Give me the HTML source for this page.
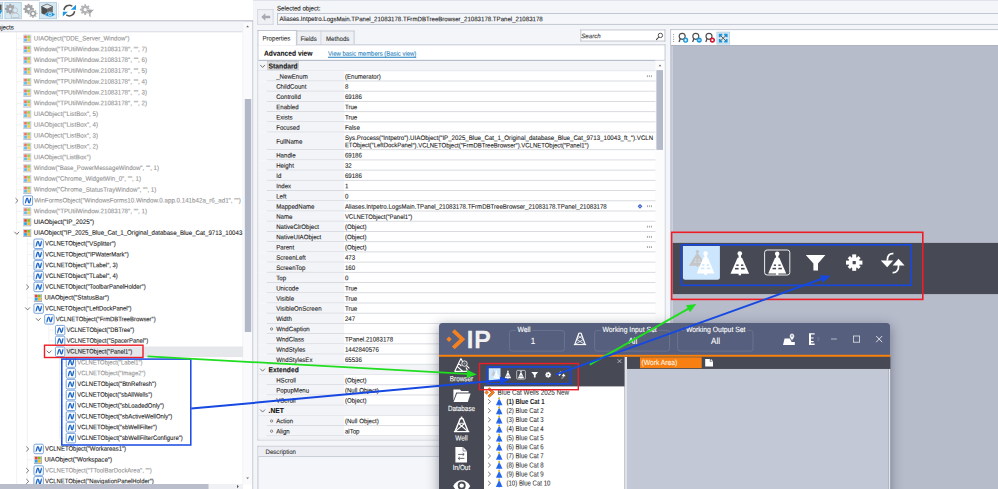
<!DOCTYPE html><html><head><meta charset="utf-8"><title>Object Browser</title><style>
*{margin:0;padding:0;box-sizing:border-box}
html,body{width:998px;height:489px;overflow:hidden;background:#f4f5f8}
body{position:relative;font-family:"Liberation Sans",sans-serif;font-size:6.1px;color:#1a1a1a}
.a{position:absolute}
.t{position:absolute;white-space:nowrap;line-height:10px;height:10px;-webkit-text-stroke:0.1px;font-size:6.6px;transform:scaleX(.925) rotate(.03deg);transform-origin:0 50%}
.c{transform-origin:50% 50%;text-align:center}
.g{color:#929292}
.b{font-weight:bold}
svg{position:absolute;overflow:visible}
</style></head><body>
<svg style="left:0;top:0" width="998" height="489" viewBox="0 0 998 489"><rect x="0.00" y="0.00" width="253.00" height="489.00" fill="#fff"/><rect x="0.00" y="0.00" width="40.00" height="1.00" fill="#d5d8e0"/><rect x="-3.00" y="2.30" width="5.90" height="16.80" fill="#d6e8f2"/><rect x="-3.00" y="2.30" width="5.90" height="0.7" fill="#a9c9de"/><rect x="2.20" y="2.30" width="0.7" height="16.80" fill="#a9c9de"/><rect x="-3.00" y="18.40" width="5.90" height="0.7" fill="#a9c9de"/><rect x="-3.00" y="2.30" width="0.7" height="16.80" fill="#a9c9de"/><rect x="4.60" y="2.30" width="17.00" height="16.80" fill="#d6e8f2"/><rect x="4.60" y="2.30" width="17.00" height="0.7" fill="#a9c9de"/><rect x="20.90" y="2.30" width="0.7" height="16.80" fill="#a9c9de"/><rect x="4.60" y="18.40" width="17.00" height="0.7" fill="#a9c9de"/><rect x="4.60" y="2.30" width="0.7" height="16.80" fill="#a9c9de"/><rect x="39.10" y="2.30" width="17.70" height="16.80" fill="#d6e8f2"/><rect x="39.10" y="2.30" width="17.70" height="0.7" fill="#a9c9de"/><rect x="56.10" y="2.30" width="0.7" height="16.80" fill="#a9c9de"/><rect x="39.10" y="18.40" width="17.70" height="0.7" fill="#a9c9de"/><rect x="39.10" y="2.30" width="0.7" height="16.80" fill="#a9c9de"/><rect x="58.30" y="3.00" width="0.80" height="15.00" fill="#e2e4ea"/><rect x="0.00" y="20.30" width="253.00" height="1.40" fill="#b4b8c6"/><rect x="0.00" y="21.40" width="243.00" height="10.80" fill="#f4f5f9"/><rect x="0.00" y="31.40" width="243.00" height="0.8" fill="#d4d7e0"/></svg>
<div class="t " style="left:-7px;top:22px;transform:translate(0.00px,0.50px) scaleX(0.925) rotate(.03deg);">Objects</div>
<svg style="left:0;top:0" width="998" height="489" viewBox="0 0 998 489"><rect x="242.60" y="21.60" width="10.00" height="463.00" fill="#fafafc"/><rect x="242.60" y="21.60" width="0.6" height="463.00" fill="#eceef2"/><rect x="244.80" y="99.00" width="6.40" height="233.00" fill="#b3b8c8"/><rect x="252.30" y="20.20" width="0.90" height="469.00" fill="#c3c7d2"/><rect x="0.00" y="484.00" width="243.00" height="5.00" fill="#f0f1f5"/><rect x="0.00" y="484.00" width="208.50" height="5.00" fill="#b9bdcc"/><rect x="65.65" y="346.50" width="177.35" height="10.60" fill="#e6e7ea"/></svg>
<div class="t g" style="left:33px;top:33px;transform:translate(0.85px,0.40px) scaleX(0.9264) rotate(.03deg);">UIAObject(&quot;DDE_Server_Window&quot;)</div>
<div class="t g" style="left:33px;top:44px;transform:translate(0.85px,0.20px) scaleX(0.9404) rotate(.03deg);">Window(&quot;TPUtilWindow.21083178&quot;, &quot;&quot;, 7)</div>
<div class="t g" style="left:33px;top:55px;transform:translate(0.85px,0.00px) scaleX(0.9404) rotate(.03deg);">Window(&quot;TPUtilWindow.21083178&quot;, &quot;&quot;, 6)</div>
<div class="t g" style="left:33px;top:65px;transform:translate(0.85px,0.80px) scaleX(0.9404) rotate(.03deg);">Window(&quot;TPUtilWindow.21083178&quot;, &quot;&quot;, 5)</div>
<div class="t g" style="left:33px;top:76px;transform:translate(0.85px,0.60px) scaleX(0.9404) rotate(.03deg);">Window(&quot;TPUtilWindow.21083178&quot;, &quot;&quot;, 4)</div>
<div class="t g" style="left:33px;top:87px;transform:translate(0.85px,0.40px) scaleX(0.9404) rotate(.03deg);">Window(&quot;TPUtilWindow.21083178&quot;, &quot;&quot;, 3)</div>
<div class="t g" style="left:33px;top:98px;transform:translate(0.85px,0.20px) scaleX(0.9404) rotate(.03deg);">Window(&quot;TPUtilWindow.21083178&quot;, &quot;&quot;, 2)</div>
<div class="t g" style="left:33px;top:109px;transform:translate(0.85px,0.00px) scaleX(0.9438) rotate(.03deg);">UIAObject(&quot;ListBox&quot;, 5)</div>
<div class="t g" style="left:33px;top:119px;transform:translate(0.85px,0.80px) scaleX(0.9438) rotate(.03deg);">UIAObject(&quot;ListBox&quot;, 4)</div>
<div class="t g" style="left:33px;top:130px;transform:translate(0.85px,0.60px) scaleX(0.9438) rotate(.03deg);">UIAObject(&quot;ListBox&quot;, 3)</div>
<div class="t g" style="left:33px;top:141px;transform:translate(0.85px,0.40px) scaleX(0.9438) rotate(.03deg);">UIAObject(&quot;ListBox&quot;, 2)</div>
<div class="t g" style="left:33px;top:152px;transform:translate(0.85px,0.20px) scaleX(0.9358) rotate(.03deg);">UIAObject(&quot;ListBox&quot;)</div>
<div class="t g" style="left:33px;top:163px;transform:translate(0.85px,0.00px) scaleX(0.9216) rotate(.03deg);">Window(&quot;Base_PowerMessageWindow&quot;, &quot;&quot;, 1)</div>
<div class="t g" style="left:33px;top:173px;transform:translate(0.85px,0.80px) scaleX(0.9356) rotate(.03deg);">Window(&quot;Chrome_WidgetWin_0&quot;, &quot;&quot;, 1)</div>
<div class="t g" style="left:33px;top:184px;transform:translate(0.85px,0.60px) scaleX(0.9396) rotate(.03deg);">Window(&quot;Chrome_StatusTrayWindow&quot;, &quot;&quot;, 1)</div>
<div class="t g" style="left:34px;top:195px;transform:translate(0.20px,0.40px) scaleX(0.9398) rotate(.03deg);">WinFormsObject(&quot;WindowsForms10.Window.0.app.0.141b42a_r6_ad1&quot;, &quot;&quot;)</div>
<div class="t g" style="left:33px;top:206px;transform:translate(0.85px,0.20px) scaleX(0.9404) rotate(.03deg);">Window(&quot;TPUtilWindow.21083178&quot;, &quot;&quot;, 1)</div>
<div class="t " style="left:33px;top:217px;transform:translate(0.85px,0.00px) scaleX(0.9445) rotate(.03deg);">UIAObject(&quot;IP_2025&quot;)</div>
<div class="t " style="left:33px;top:227px;transform:translate(0.85px,0.80px) scaleX(0.9239) rotate(.03deg);">UIAObject(&quot;IP_2025_Blue_Cat_1_Original_database_Blue_Cat_9713_10043</div>
<div class="t " style="left:44px;top:238px;transform:translate(0.95px,0.60px) scaleX(0.8961) rotate(.03deg);">VCLNETObject(&quot;VSplitter&quot;)</div>
<div class="t " style="left:44px;top:249px;transform:translate(0.95px,0.40px) scaleX(0.9079) rotate(.03deg);">VCLNETObject(&quot;IPWaterMark&quot;)</div>
<div class="t " style="left:44px;top:260px;transform:translate(0.95px,0.20px) scaleX(0.8935) rotate(.03deg);">VCLNETObject(&quot;TLabel&quot;, 3)</div>
<div class="t " style="left:44px;top:271px;transform:translate(0.95px,0.00px) scaleX(0.8935) rotate(.03deg);">VCLNETObject(&quot;TLabel&quot;, 4)</div>
<div class="t " style="left:44px;top:281px;transform:translate(0.95px,0.80px) scaleX(0.8999) rotate(.03deg);">VCLNETObject(&quot;ToolbarPanelHolder&quot;)</div>
<div class="t " style="left:44px;top:292px;transform:translate(0.60px,0.60px) scaleX(0.946) rotate(.03deg);">UIAObject(&quot;StatusBar&quot;)</div>
<div class="t " style="left:44px;top:303px;transform:translate(0.95px,0.40px) scaleX(0.894) rotate(.03deg);">VCLNETObject(&quot;LeftDockPanel&quot;)</div>
<div class="t " style="left:55px;top:314px;transform:translate(0.70px,0.20px) scaleX(0.8887) rotate(.03deg);">VCLNETObject(&quot;FrmDBTreeBrowser&quot;)</div>
<div class="t " style="left:66px;top:325px;transform:translate(0.45px,0.00px) scaleX(0.8869) rotate(.03deg);">VCLNETObject(&quot;DBTree&quot;)</div>
<div class="t " style="left:66px;top:335px;transform:translate(0.45px,0.80px) scaleX(0.8896) rotate(.03deg);">VCLNETObject(&quot;SpacerPanel&quot;)</div>
<div class="t " style="left:66px;top:346px;transform:translate(0.45px,0.60px) scaleX(0.8832) rotate(.03deg);">VCLNETObject(&quot;Panel1&quot;)</div>
<div class="t g" style="left:77px;top:357px;transform:translate(0.20px,0.40px) scaleX(0.8845) rotate(.03deg);">VCLNETObject(&quot;Label1&quot;)</div>
<div class="t g" style="left:77px;top:368px;transform:translate(0.20px,0.20px) scaleX(0.8996) rotate(.03deg);">VCLNETObject(&quot;Image2&quot;)</div>
<div class="t " style="left:77px;top:379px;transform:translate(0.20px,0.00px) scaleX(0.9079) rotate(.03deg);">VCLNETObject(&quot;BtnRefresh&quot;)</div>
<div class="t " style="left:77px;top:389px;transform:translate(0.20px,0.80px) scaleX(0.8894) rotate(.03deg);">VCLNETObject(&quot;sbAllWells&quot;)</div>
<div class="t " style="left:77px;top:400px;transform:translate(0.20px,0.60px) scaleX(0.8999) rotate(.03deg);">VCLNETObject(&quot;sbLoadedOnly&quot;)</div>
<div class="t " style="left:77px;top:411px;transform:translate(0.20px,0.40px) scaleX(0.9038) rotate(.03deg);">VCLNETObject(&quot;sbActiveWellOnly&quot;)</div>
<div class="t " style="left:77px;top:422px;transform:translate(0.20px,0.20px) scaleX(0.9033) rotate(.03deg);">VCLNETObject(&quot;sbWellFilter&quot;)</div>
<div class="t " style="left:77px;top:433px;transform:translate(0.20px,0.00px) scaleX(0.903) rotate(.03deg);">VCLNETObject(&quot;sbWellFilterConfigure&quot;)</div>
<div class="t " style="left:44px;top:443px;transform:translate(0.95px,0.80px) scaleX(0.9072) rotate(.03deg);">VCLNETObject(&quot;Workareas1&quot;)</div>
<div class="t " style="left:44px;top:454px;transform:translate(0.60px,0.60px) scaleX(0.9377) rotate(.03deg);">UIAObject(&quot;Workspace&quot;)</div>
<div class="t g" style="left:44px;top:465px;transform:translate(0.95px,0.40px) scaleX(0.9068) rotate(.03deg);">VCLNETObject(&quot;TToolBarDockArea&quot;, &quot;&quot;)</div>
<div class="t " style="left:44px;top:476px;transform:translate(0.95px,0.20px) scaleX(0.896) rotate(.03deg);">VCLNETObject(&quot;NavigationPanelHolder&quot;)</div>
<svg class="a" style="left:0;top:0" width="253" height="489" viewBox="0 0 253 489"><path d="M16.60 32.12 V492.20" stroke="#ececee" stroke-width="0.7"/><path d="M27.35 238.40 V481.40" stroke="#ececee" stroke-width="0.7"/><path d="M38.10 314.00 V319.40" stroke="#ececee" stroke-width="0.7"/><path d="M48.85 324.80 V351.80" stroke="#ececee" stroke-width="0.7"/><path d="M59.60 357.20 V438.20" stroke="#ececee" stroke-width="0.7"/><g opacity="0.75"><rect x="23.20" y="34.70" width="8" height="8" rx="0.5" fill="#9aa3b8"/><rect x="23.20" y="34.70" width="7.4" height="7.4" rx="0.5" fill="#d3d7df"/><rect x="24.20" y="35.60" width="2.6" height="2.6" fill="#f0402c"/><rect x="27.30" y="35.60" width="2.6" height="2.6" fill="#7cc019"/><rect x="24.20" y="38.70" width="2.6" height="2.6" fill="#1aa7f0"/><rect x="27.30" y="38.70" width="2.6" height="2.6" fill="#fdb90c"/></g><path d="M16.60 38.60 H21.90" stroke="#ececee" stroke-width="0.7"/><g opacity="0.75"><rect x="23.20" y="45.50" width="8" height="8" rx="0.5" fill="#9aa3b8"/><rect x="23.20" y="45.50" width="7.4" height="7.4" rx="0.5" fill="#d3d7df"/><rect x="24.20" y="46.40" width="2.6" height="2.6" fill="#f0402c"/><rect x="27.30" y="46.40" width="2.6" height="2.6" fill="#7cc019"/><rect x="24.20" y="49.50" width="2.6" height="2.6" fill="#1aa7f0"/><rect x="27.30" y="49.50" width="2.6" height="2.6" fill="#fdb90c"/></g><path d="M16.60 49.40 H21.90" stroke="#ececee" stroke-width="0.7"/><g opacity="0.75"><rect x="23.20" y="56.30" width="8" height="8" rx="0.5" fill="#9aa3b8"/><rect x="23.20" y="56.30" width="7.4" height="7.4" rx="0.5" fill="#d3d7df"/><rect x="24.20" y="57.20" width="2.6" height="2.6" fill="#f0402c"/><rect x="27.30" y="57.20" width="2.6" height="2.6" fill="#7cc019"/><rect x="24.20" y="60.30" width="2.6" height="2.6" fill="#1aa7f0"/><rect x="27.30" y="60.30" width="2.6" height="2.6" fill="#fdb90c"/></g><path d="M16.60 60.20 H21.90" stroke="#ececee" stroke-width="0.7"/><g opacity="0.75"><rect x="23.20" y="67.10" width="8" height="8" rx="0.5" fill="#9aa3b8"/><rect x="23.20" y="67.10" width="7.4" height="7.4" rx="0.5" fill="#d3d7df"/><rect x="24.20" y="68.00" width="2.6" height="2.6" fill="#f0402c"/><rect x="27.30" y="68.00" width="2.6" height="2.6" fill="#7cc019"/><rect x="24.20" y="71.10" width="2.6" height="2.6" fill="#1aa7f0"/><rect x="27.30" y="71.10" width="2.6" height="2.6" fill="#fdb90c"/></g><path d="M16.60 71.00 H21.90" stroke="#ececee" stroke-width="0.7"/><g opacity="0.75"><rect x="23.20" y="77.90" width="8" height="8" rx="0.5" fill="#9aa3b8"/><rect x="23.20" y="77.90" width="7.4" height="7.4" rx="0.5" fill="#d3d7df"/><rect x="24.20" y="78.80" width="2.6" height="2.6" fill="#f0402c"/><rect x="27.30" y="78.80" width="2.6" height="2.6" fill="#7cc019"/><rect x="24.20" y="81.90" width="2.6" height="2.6" fill="#1aa7f0"/><rect x="27.30" y="81.90" width="2.6" height="2.6" fill="#fdb90c"/></g><path d="M16.60 81.80 H21.90" stroke="#ececee" stroke-width="0.7"/><g opacity="0.75"><rect x="23.20" y="88.70" width="8" height="8" rx="0.5" fill="#9aa3b8"/><rect x="23.20" y="88.70" width="7.4" height="7.4" rx="0.5" fill="#d3d7df"/><rect x="24.20" y="89.60" width="2.6" height="2.6" fill="#f0402c"/><rect x="27.30" y="89.60" width="2.6" height="2.6" fill="#7cc019"/><rect x="24.20" y="92.70" width="2.6" height="2.6" fill="#1aa7f0"/><rect x="27.30" y="92.70" width="2.6" height="2.6" fill="#fdb90c"/></g><path d="M16.60 92.60 H21.90" stroke="#ececee" stroke-width="0.7"/><g opacity="0.75"><rect x="23.20" y="99.50" width="8" height="8" rx="0.5" fill="#9aa3b8"/><rect x="23.20" y="99.50" width="7.4" height="7.4" rx="0.5" fill="#d3d7df"/><rect x="24.20" y="100.40" width="2.6" height="2.6" fill="#f0402c"/><rect x="27.30" y="100.40" width="2.6" height="2.6" fill="#7cc019"/><rect x="24.20" y="103.50" width="2.6" height="2.6" fill="#1aa7f0"/><rect x="27.30" y="103.50" width="2.6" height="2.6" fill="#fdb90c"/></g><path d="M16.60 103.40 H21.90" stroke="#ececee" stroke-width="0.7"/><g opacity="0.75"><rect x="23.20" y="110.30" width="8" height="8" rx="0.5" fill="#9aa3b8"/><rect x="23.20" y="110.30" width="7.4" height="7.4" rx="0.5" fill="#d3d7df"/><rect x="24.20" y="111.20" width="2.6" height="2.6" fill="#f0402c"/><rect x="27.30" y="111.20" width="2.6" height="2.6" fill="#7cc019"/><rect x="24.20" y="114.30" width="2.6" height="2.6" fill="#1aa7f0"/><rect x="27.30" y="114.30" width="2.6" height="2.6" fill="#fdb90c"/></g><path d="M16.60 114.20 H21.90" stroke="#ececee" stroke-width="0.7"/><g opacity="0.75"><rect x="23.20" y="121.10" width="8" height="8" rx="0.5" fill="#9aa3b8"/><rect x="23.20" y="121.10" width="7.4" height="7.4" rx="0.5" fill="#d3d7df"/><rect x="24.20" y="122.00" width="2.6" height="2.6" fill="#f0402c"/><rect x="27.30" y="122.00" width="2.6" height="2.6" fill="#7cc019"/><rect x="24.20" y="125.10" width="2.6" height="2.6" fill="#1aa7f0"/><rect x="27.30" y="125.10" width="2.6" height="2.6" fill="#fdb90c"/></g><path d="M16.60 125.00 H21.90" stroke="#ececee" stroke-width="0.7"/><g opacity="0.75"><rect x="23.20" y="131.90" width="8" height="8" rx="0.5" fill="#9aa3b8"/><rect x="23.20" y="131.90" width="7.4" height="7.4" rx="0.5" fill="#d3d7df"/><rect x="24.20" y="132.80" width="2.6" height="2.6" fill="#f0402c"/><rect x="27.30" y="132.80" width="2.6" height="2.6" fill="#7cc019"/><rect x="24.20" y="135.90" width="2.6" height="2.6" fill="#1aa7f0"/><rect x="27.30" y="135.90" width="2.6" height="2.6" fill="#fdb90c"/></g><path d="M16.60 135.80 H21.90" stroke="#ececee" stroke-width="0.7"/><g opacity="0.75"><rect x="23.20" y="142.70" width="8" height="8" rx="0.5" fill="#9aa3b8"/><rect x="23.20" y="142.70" width="7.4" height="7.4" rx="0.5" fill="#d3d7df"/><rect x="24.20" y="143.60" width="2.6" height="2.6" fill="#f0402c"/><rect x="27.30" y="143.60" width="2.6" height="2.6" fill="#7cc019"/><rect x="24.20" y="146.70" width="2.6" height="2.6" fill="#1aa7f0"/><rect x="27.30" y="146.70" width="2.6" height="2.6" fill="#fdb90c"/></g><path d="M16.60 146.60 H21.90" stroke="#ececee" stroke-width="0.7"/><g opacity="0.75"><rect x="23.20" y="153.50" width="8" height="8" rx="0.5" fill="#9aa3b8"/><rect x="23.20" y="153.50" width="7.4" height="7.4" rx="0.5" fill="#d3d7df"/><rect x="24.20" y="154.40" width="2.6" height="2.6" fill="#f0402c"/><rect x="27.30" y="154.40" width="2.6" height="2.6" fill="#7cc019"/><rect x="24.20" y="157.50" width="2.6" height="2.6" fill="#1aa7f0"/><rect x="27.30" y="157.50" width="2.6" height="2.6" fill="#fdb90c"/></g><path d="M16.60 157.40 H21.90" stroke="#ececee" stroke-width="0.7"/><g opacity="0.75"><rect x="23.20" y="164.30" width="8" height="8" rx="0.5" fill="#9aa3b8"/><rect x="23.20" y="164.30" width="7.4" height="7.4" rx="0.5" fill="#d3d7df"/><rect x="24.20" y="165.20" width="2.6" height="2.6" fill="#f0402c"/><rect x="27.30" y="165.20" width="2.6" height="2.6" fill="#7cc019"/><rect x="24.20" y="168.30" width="2.6" height="2.6" fill="#1aa7f0"/><rect x="27.30" y="168.30" width="2.6" height="2.6" fill="#fdb90c"/></g><path d="M16.60 168.20 H21.90" stroke="#ececee" stroke-width="0.7"/><g opacity="0.75"><rect x="23.20" y="175.10" width="8" height="8" rx="0.5" fill="#9aa3b8"/><rect x="23.20" y="175.10" width="7.4" height="7.4" rx="0.5" fill="#d3d7df"/><rect x="24.20" y="176.00" width="2.6" height="2.6" fill="#f0402c"/><rect x="27.30" y="176.00" width="2.6" height="2.6" fill="#7cc019"/><rect x="24.20" y="179.10" width="2.6" height="2.6" fill="#1aa7f0"/><rect x="27.30" y="179.10" width="2.6" height="2.6" fill="#fdb90c"/></g><path d="M16.60 179.00 H21.90" stroke="#ececee" stroke-width="0.7"/><g opacity="0.75"><rect x="23.20" y="185.90" width="8" height="8" rx="0.5" fill="#9aa3b8"/><rect x="23.20" y="185.90" width="7.4" height="7.4" rx="0.5" fill="#d3d7df"/><rect x="24.20" y="186.80" width="2.6" height="2.6" fill="#f0402c"/><rect x="27.30" y="186.80" width="2.6" height="2.6" fill="#7cc019"/><rect x="24.20" y="189.90" width="2.6" height="2.6" fill="#1aa7f0"/><rect x="27.30" y="189.90" width="2.6" height="2.6" fill="#fdb90c"/></g><path d="M16.60 189.80 H21.90" stroke="#ececee" stroke-width="0.7"/><g><rect x="23.20" y="195.80" width="9.4" height="9.5" rx="1.2" fill="#fff" stroke="#5b8ecf" stroke-width="0.8"/><path d="M24.90 203.10 C26.20 203.10 25.80 198.30 27.10 198.30 C28.50 198.30 27.80 202.80 29.20 202.80 C30.40 202.80 30.00 198.10 31.10 198.10" fill="none" stroke="#1f68c8" stroke-width="1.45"/></g><path d="M15.50 198.20 L18.00 200.60 L15.50 203.00" fill="none" stroke="#555" stroke-width="0.8"/><g opacity="0.75"><rect x="23.20" y="207.50" width="8" height="8" rx="0.5" fill="#9aa3b8"/><rect x="23.20" y="207.50" width="7.4" height="7.4" rx="0.5" fill="#d3d7df"/><rect x="24.20" y="208.40" width="2.6" height="2.6" fill="#f0402c"/><rect x="27.30" y="208.40" width="2.6" height="2.6" fill="#7cc019"/><rect x="24.20" y="211.50" width="2.6" height="2.6" fill="#1aa7f0"/><rect x="27.30" y="211.50" width="2.6" height="2.6" fill="#fdb90c"/></g><path d="M16.60 211.40 H21.90" stroke="#ececee" stroke-width="0.7"/><g><rect x="23.20" y="218.30" width="8" height="8" rx="0.5" fill="#9aa3b8"/><rect x="23.20" y="218.30" width="7.4" height="7.4" rx="0.5" fill="#d3d7df"/><rect x="24.20" y="219.20" width="2.6" height="2.6" fill="#f0402c"/><rect x="27.30" y="219.20" width="2.6" height="2.6" fill="#7cc019"/><rect x="24.20" y="222.30" width="2.6" height="2.6" fill="#1aa7f0"/><rect x="27.30" y="222.30" width="2.6" height="2.6" fill="#fdb90c"/></g><path d="M16.60 222.20 H21.90" stroke="#ececee" stroke-width="0.7"/><g><rect x="23.20" y="229.10" width="8" height="8" rx="0.5" fill="#9aa3b8"/><rect x="23.20" y="229.10" width="7.4" height="7.4" rx="0.5" fill="#d3d7df"/><rect x="24.20" y="230.00" width="2.6" height="2.6" fill="#f0402c"/><rect x="27.30" y="230.00" width="2.6" height="2.6" fill="#7cc019"/><rect x="24.20" y="233.10" width="2.6" height="2.6" fill="#1aa7f0"/><rect x="27.30" y="233.10" width="2.6" height="2.6" fill="#fdb90c"/></g><path d="M14.40 231.80 L16.80 234.30 L19.20 231.80" fill="none" stroke="#555" stroke-width="0.8"/><g><rect x="33.95" y="239.00" width="9.4" height="9.5" rx="1.2" fill="#fff" stroke="#5b8ecf" stroke-width="0.8"/><path d="M35.65 246.30 C36.95 246.30 36.55 241.50 37.85 241.50 C39.25 241.50 38.55 246.00 39.95 246.00 C41.15 246.00 40.75 241.30 41.85 241.30" fill="none" stroke="#1f68c8" stroke-width="1.45"/></g><path d="M27.35 243.80 H32.65" stroke="#ececee" stroke-width="0.7"/><g><rect x="33.95" y="249.80" width="9.4" height="9.5" rx="1.2" fill="#fff" stroke="#5b8ecf" stroke-width="0.8"/><path d="M35.65 257.10 C36.95 257.10 36.55 252.30 37.85 252.30 C39.25 252.30 38.55 256.80 39.95 256.80 C41.15 256.80 40.75 252.10 41.85 252.10" fill="none" stroke="#1f68c8" stroke-width="1.45"/></g><path d="M27.35 254.60 H32.65" stroke="#ececee" stroke-width="0.7"/><g><rect x="33.95" y="260.60" width="9.4" height="9.5" rx="1.2" fill="#fff" stroke="#5b8ecf" stroke-width="0.8"/><path d="M35.65 267.90 C36.95 267.90 36.55 263.10 37.85 263.10 C39.25 263.10 38.55 267.60 39.95 267.60 C41.15 267.60 40.75 262.90 41.85 262.90" fill="none" stroke="#1f68c8" stroke-width="1.45"/></g><path d="M27.35 265.40 H32.65" stroke="#ececee" stroke-width="0.7"/><g><rect x="33.95" y="271.40" width="9.4" height="9.5" rx="1.2" fill="#fff" stroke="#5b8ecf" stroke-width="0.8"/><path d="M35.65 278.70 C36.95 278.70 36.55 273.90 37.85 273.90 C39.25 273.90 38.55 278.40 39.95 278.40 C41.15 278.40 40.75 273.70 41.85 273.70" fill="none" stroke="#1f68c8" stroke-width="1.45"/></g><path d="M27.35 276.20 H32.65" stroke="#ececee" stroke-width="0.7"/><g><rect x="33.95" y="282.20" width="9.4" height="9.5" rx="1.2" fill="#fff" stroke="#5b8ecf" stroke-width="0.8"/><path d="M35.65 289.50 C36.95 289.50 36.55 284.70 37.85 284.70 C39.25 284.70 38.55 289.20 39.95 289.20 C41.15 289.20 40.75 284.50 41.85 284.50" fill="none" stroke="#1f68c8" stroke-width="1.45"/></g><path d="M26.25 284.60 L28.75 287.00 L26.25 289.40" fill="none" stroke="#555" stroke-width="0.8"/><g><rect x="33.95" y="293.90" width="8" height="8" rx="0.5" fill="#9aa3b8"/><rect x="33.95" y="293.90" width="7.4" height="7.4" rx="0.5" fill="#d3d7df"/><rect x="34.95" y="294.80" width="2.6" height="2.6" fill="#f0402c"/><rect x="38.05" y="294.80" width="2.6" height="2.6" fill="#7cc019"/><rect x="34.95" y="297.90" width="2.6" height="2.6" fill="#1aa7f0"/><rect x="38.05" y="297.90" width="2.6" height="2.6" fill="#fdb90c"/></g><path d="M27.35 297.80 H32.65" stroke="#ececee" stroke-width="0.7"/><g><rect x="33.95" y="303.80" width="9.4" height="9.5" rx="1.2" fill="#fff" stroke="#5b8ecf" stroke-width="0.8"/><path d="M35.65 311.10 C36.95 311.10 36.55 306.30 37.85 306.30 C39.25 306.30 38.55 310.80 39.95 310.80 C41.15 310.80 40.75 306.10 41.85 306.10" fill="none" stroke="#1f68c8" stroke-width="1.45"/></g><path d="M25.15 307.40 L27.55 309.90 L29.95 307.40" fill="none" stroke="#555" stroke-width="0.8"/><g><rect x="44.70" y="314.60" width="9.4" height="9.5" rx="1.2" fill="#fff" stroke="#5b8ecf" stroke-width="0.8"/><path d="M46.40 321.90 C47.70 321.90 47.30 317.10 48.60 317.10 C50.00 317.10 49.30 321.60 50.70 321.60 C51.90 321.60 51.50 316.90 52.60 316.90" fill="none" stroke="#1f68c8" stroke-width="1.45"/></g><path d="M35.90 318.20 L38.30 320.70 L40.70 318.20" fill="none" stroke="#555" stroke-width="0.8"/><g><rect x="55.45" y="325.40" width="9.4" height="9.5" rx="1.2" fill="#fff" stroke="#5b8ecf" stroke-width="0.8"/><path d="M57.15 332.70 C58.45 332.70 58.05 327.90 59.35 327.90 C60.75 327.90 60.05 332.40 61.45 332.40 C62.65 332.40 62.25 327.70 63.35 327.70" fill="none" stroke="#1f68c8" stroke-width="1.45"/></g><path d="M48.85 330.20 H54.15" stroke="#ececee" stroke-width="0.7"/><g><rect x="55.45" y="336.20" width="9.4" height="9.5" rx="1.2" fill="#fff" stroke="#5b8ecf" stroke-width="0.8"/><path d="M57.15 343.50 C58.45 343.50 58.05 338.70 59.35 338.70 C60.75 338.70 60.05 343.20 61.45 343.20 C62.65 343.20 62.25 338.50 63.35 338.50" fill="none" stroke="#1f68c8" stroke-width="1.45"/></g><path d="M48.85 341.00 H54.15" stroke="#ececee" stroke-width="0.7"/><g><rect x="55.45" y="347.00" width="9.4" height="9.5" rx="1.2" fill="#fff" stroke="#5b8ecf" stroke-width="0.8"/><path d="M57.15 354.30 C58.45 354.30 58.05 349.50 59.35 349.50 C60.75 349.50 60.05 354.00 61.45 354.00 C62.65 354.00 62.25 349.30 63.35 349.30" fill="none" stroke="#1f68c8" stroke-width="1.45"/></g><path d="M46.65 350.60 L49.05 353.10 L51.45 350.60" fill="none" stroke="#555" stroke-width="0.8"/><g><rect x="66.20" y="357.80" width="9.4" height="9.5" rx="1.2" fill="#fff" stroke="#5b8ecf" stroke-width="0.8"/><path d="M67.90 365.10 C69.20 365.10 68.80 360.30 70.10 360.30 C71.50 360.30 70.80 364.80 72.20 364.80 C73.40 364.80 73.00 360.10 74.10 360.10" fill="none" stroke="#1f68c8" stroke-width="1.45"/></g><path d="M59.60 362.60 H64.90" stroke="#ececee" stroke-width="0.7"/><g><rect x="66.20" y="368.60" width="9.4" height="9.5" rx="1.2" fill="#fff" stroke="#5b8ecf" stroke-width="0.8"/><path d="M67.90 375.90 C69.20 375.90 68.80 371.10 70.10 371.10 C71.50 371.10 70.80 375.60 72.20 375.60 C73.40 375.60 73.00 370.90 74.10 370.90" fill="none" stroke="#1f68c8" stroke-width="1.45"/></g><path d="M59.60 373.40 H64.90" stroke="#ececee" stroke-width="0.7"/><g><rect x="66.20" y="379.40" width="9.4" height="9.5" rx="1.2" fill="#fff" stroke="#5b8ecf" stroke-width="0.8"/><path d="M67.90 386.70 C69.20 386.70 68.80 381.90 70.10 381.90 C71.50 381.90 70.80 386.40 72.20 386.40 C73.40 386.40 73.00 381.70 74.10 381.70" fill="none" stroke="#1f68c8" stroke-width="1.45"/></g><path d="M59.60 384.20 H64.90" stroke="#ececee" stroke-width="0.7"/><g><rect x="66.20" y="390.20" width="9.4" height="9.5" rx="1.2" fill="#fff" stroke="#5b8ecf" stroke-width="0.8"/><path d="M67.90 397.50 C69.20 397.50 68.80 392.70 70.10 392.70 C71.50 392.70 70.80 397.20 72.20 397.20 C73.40 397.20 73.00 392.50 74.10 392.50" fill="none" stroke="#1f68c8" stroke-width="1.45"/></g><path d="M59.60 395.00 H64.90" stroke="#ececee" stroke-width="0.7"/><g><rect x="66.20" y="401.00" width="9.4" height="9.5" rx="1.2" fill="#fff" stroke="#5b8ecf" stroke-width="0.8"/><path d="M67.90 408.30 C69.20 408.30 68.80 403.50 70.10 403.50 C71.50 403.50 70.80 408.00 72.20 408.00 C73.40 408.00 73.00 403.30 74.10 403.30" fill="none" stroke="#1f68c8" stroke-width="1.45"/></g><path d="M59.60 405.80 H64.90" stroke="#ececee" stroke-width="0.7"/><g><rect x="66.20" y="411.80" width="9.4" height="9.5" rx="1.2" fill="#fff" stroke="#5b8ecf" stroke-width="0.8"/><path d="M67.90 419.10 C69.20 419.10 68.80 414.30 70.10 414.30 C71.50 414.30 70.80 418.80 72.20 418.80 C73.40 418.80 73.00 414.10 74.10 414.10" fill="none" stroke="#1f68c8" stroke-width="1.45"/></g><path d="M59.60 416.60 H64.90" stroke="#ececee" stroke-width="0.7"/><g><rect x="66.20" y="422.60" width="9.4" height="9.5" rx="1.2" fill="#fff" stroke="#5b8ecf" stroke-width="0.8"/><path d="M67.90 429.90 C69.20 429.90 68.80 425.10 70.10 425.10 C71.50 425.10 70.80 429.60 72.20 429.60 C73.40 429.60 73.00 424.90 74.10 424.90" fill="none" stroke="#1f68c8" stroke-width="1.45"/></g><path d="M59.60 427.40 H64.90" stroke="#ececee" stroke-width="0.7"/><g><rect x="66.20" y="433.40" width="9.4" height="9.5" rx="1.2" fill="#fff" stroke="#5b8ecf" stroke-width="0.8"/><path d="M67.90 440.70 C69.20 440.70 68.80 435.90 70.10 435.90 C71.50 435.90 70.80 440.40 72.20 440.40 C73.40 440.40 73.00 435.70 74.10 435.70" fill="none" stroke="#1f68c8" stroke-width="1.45"/></g><path d="M59.60 438.20 H64.90" stroke="#ececee" stroke-width="0.7"/><g><rect x="33.95" y="444.20" width="9.4" height="9.5" rx="1.2" fill="#fff" stroke="#5b8ecf" stroke-width="0.8"/><path d="M35.65 451.50 C36.95 451.50 36.55 446.70 37.85 446.70 C39.25 446.70 38.55 451.20 39.95 451.20 C41.15 451.20 40.75 446.50 41.85 446.50" fill="none" stroke="#1f68c8" stroke-width="1.45"/></g><path d="M26.25 446.60 L28.75 449.00 L26.25 451.40" fill="none" stroke="#555" stroke-width="0.8"/><g><rect x="33.95" y="455.90" width="8" height="8" rx="0.5" fill="#9aa3b8"/><rect x="33.95" y="455.90" width="7.4" height="7.4" rx="0.5" fill="#d3d7df"/><rect x="34.95" y="456.80" width="2.6" height="2.6" fill="#f0402c"/><rect x="38.05" y="456.80" width="2.6" height="2.6" fill="#7cc019"/><rect x="34.95" y="459.90" width="2.6" height="2.6" fill="#1aa7f0"/><rect x="38.05" y="459.90" width="2.6" height="2.6" fill="#fdb90c"/></g><path d="M27.35 459.80 H32.65" stroke="#ececee" stroke-width="0.7"/><g><rect x="33.95" y="465.80" width="9.4" height="9.5" rx="1.2" fill="#fff" stroke="#5b8ecf" stroke-width="0.8"/><path d="M35.65 473.10 C36.95 473.10 36.55 468.30 37.85 468.30 C39.25 468.30 38.55 472.80 39.95 472.80 C41.15 472.80 40.75 468.10 41.85 468.10" fill="none" stroke="#1f68c8" stroke-width="1.45"/></g><path d="M26.25 468.20 L28.75 470.60 L26.25 473.00" fill="none" stroke="#555" stroke-width="0.8"/><g><rect x="33.95" y="476.60" width="9.4" height="9.5" rx="1.2" fill="#fff" stroke="#5b8ecf" stroke-width="0.8"/><path d="M35.65 483.90 C36.95 483.90 36.55 479.10 37.85 479.10 C39.25 479.10 38.55 483.60 39.95 483.60 C41.15 483.60 40.75 478.90 41.85 478.90" fill="none" stroke="#1f68c8" stroke-width="1.45"/></g><path d="M26.25 479.00 L28.75 481.40 L26.25 483.80" fill="none" stroke="#555" stroke-width="0.8"/></svg>
<svg style="left:0;top:0" width="998" height="489" viewBox="0 0 998 489"><rect x="0.00" y="484.00" width="243.00" height="5.00" fill="#f0f1f5"/><rect x="0.00" y="484.00" width="208.50" height="5.00" fill="#b9bdcc"/></svg>
<svg style="left:0;top:0" width="253" height="22" viewBox="0 0 253 22"><rect x="-2" y="4.5" width="3.6" height="6" fill="#555"/><path d="M-2 10.5 H2.4 L0 14.5 Z" fill="#1b96e0"/><rect x="-2" y="15" width="3" height="2.2" fill="#9fd0ee"/><path d="M15.42 8.09 L15.42 9.91 L14.19 9.96 L13.70 11.14 L14.54 12.05 L13.25 13.34 L12.34 12.50 L11.16 12.99 L11.11 14.22 L9.29 14.22 L9.24 12.99 L8.06 12.50 L7.15 13.34 L5.86 12.05 L6.70 11.14 L6.21 9.96 L4.98 9.91 L4.98 8.09 L6.21 8.04 L6.70 6.86 L5.86 5.95 L7.15 4.66 L8.06 5.50 L9.24 5.01 L9.29 3.78 L11.11 3.78 L11.16 5.01 L12.34 5.50 L13.25 4.66 L14.54 5.95 L13.70 6.86 L14.19 8.04 Z" fill="#a4a5a9"/><circle cx="10.2" cy="9.0" r="1.3" fill="#d6e8f2"/><circle cx="15.2" cy="10.3" r="2.5" fill="#d6e8f2" stroke="#b5b7bb" stroke-width="0.7"/><path d="M11.4 17.6 V15.4 Q11.4 13 15.2 13 Q19 13 19 15.4 V17.6 Z" fill="#d6e8f2" stroke="#b5b7bb" stroke-width="0.7"/><path d="M33.82 8.09 L33.82 9.91 L32.59 9.96 L32.10 11.14 L32.94 12.05 L31.65 13.34 L30.74 12.50 L29.56 12.99 L29.51 14.22 L27.69 14.22 L27.64 12.99 L26.46 12.50 L25.55 13.34 L24.26 12.05 L25.10 11.14 L24.61 9.96 L23.38 9.91 L23.38 8.09 L24.61 8.04 L25.10 6.86 L24.26 5.95 L25.55 4.66 L26.46 5.50 L27.64 5.01 L27.69 3.78 L29.51 3.78 L29.56 5.01 L30.74 5.50 L31.65 4.66 L32.94 5.95 L32.10 6.86 L32.59 8.04 Z" fill="#a4a5a9"/><circle cx="28.6" cy="9.0" r="1.3" fill="#fff"/><path d="M37.33 12.84 L37.33 14.36 L36.31 14.39 L35.90 15.38 L36.60 16.13 L35.53 17.20 L34.78 16.50 L33.79 16.91 L33.76 17.93 L32.24 17.93 L32.21 16.91 L31.22 16.50 L30.47 17.20 L29.40 16.13 L30.10 15.38 L29.69 14.39 L28.67 14.36 L28.67 12.84 L29.69 12.81 L30.10 11.82 L29.40 11.07 L30.47 10.00 L31.22 10.70 L32.21 10.29 L32.24 9.27 L33.76 9.27 L33.79 10.29 L34.78 10.70 L35.53 10.00 L36.60 11.07 L35.90 11.82 L36.31 12.81 Z" fill="#9fa0a4"/><circle cx="33.0" cy="13.6" r="1.5" fill="#fff"/><circle cx="33" cy="13.6" r="3.6" fill="none" stroke="#fff" stroke-width="0.5"/><path d="M41.4 6.6 L47 4 L52.8 6.6 L47 9.2 Z" fill="#dfeaf0" stroke="#4d4d4d" stroke-width="0.7"/><path d="M41.4 6.6 L47 9.2 V16 L41.4 13.2 Z" fill="#4d4d4d"/><path d="M47 9.2 L52.8 6.6 V13.2 L47 16 Z" fill="#666"/><path d="M44.6 14.6 Q50 9.2 55.4 14.6 Q50 19.4 44.6 14.6 Z" fill="#1b96e0" stroke="#d6e8f2" stroke-width="0.6"/><circle cx="50" cy="14.4" r="1.8" fill="#cfe9f8"/><circle cx="50" cy="14.4" r="0.9" fill="#1b96e0"/><path d="M64.02 10.14 A5.3 5.3 0 0 1 72.34 6.26" fill="none" stroke="#555" stroke-width="1.5"/><path d="M74.58 11.06 A5.3 5.3 0 0 1 66.26 14.94" fill="none" stroke="#555" stroke-width="1.5"/><path d="M76 4.8 V9.8 H70.8 Z" fill="#1b96e0"/><path d="M62.8 16.6 V11.8 H67.8 Z" fill="#1b96e0"/><path d="M90.52 8.67 L90.52 10.53 L89.09 10.53 L88.61 11.69 L89.62 12.71 L88.31 14.02 L87.29 13.01 L86.13 13.49 L86.13 14.92 L84.27 14.92 L84.27 13.49 L83.11 13.01 L82.09 14.02 L80.78 12.71 L81.79 11.69 L81.31 10.53 L79.88 10.53 L79.88 8.67 L81.31 8.67 L81.79 7.51 L80.78 6.49 L82.09 5.18 L83.11 6.19 L84.27 5.71 L84.27 4.28 L86.13 4.28 L86.13 5.71 L87.29 6.19 L88.31 5.18 L89.62 6.49 L88.61 7.51 L89.09 8.67 Z" fill="#b3b4b7"/><circle cx="85.2" cy="9.6" r="1.6" fill="#fff"/><path d="M85.6 9.6 H94.2 L90.8 13.2 V17.6 L89 16.2 V13.2 Z" fill="#a2a3a7" stroke="#fff" stroke-width="0.5"/></svg>
<svg style="left:0;top:0" width="253" height="489" viewBox="0 0 253 489"><path d="M246.2 27.2 L247.6 25.6 L249 27.2 Z" fill="#666"/><path d="M246.2 477.4 L247.6 479 L249 477.4 Z" fill="#666"/><path d="M237 484.8 L238.8 486.5 L237 488.2 Z" fill="#555"/></svg>
<svg style="left:0;top:0" width="998" height="489" viewBox="0 0 998 489"><rect x="253.00" y="0.00" width="745.00" height="1.00" fill="#e1e3ea"/><rect x="257.30" y="9.30" width="16.20" height="15.40" fill="#eef0f4"/><rect x="257.30" y="9.30" width="16.20" height="0.8" fill="#cfd3dc"/><rect x="272.70" y="9.30" width="0.8" height="15.40" fill="#cfd3dc"/><rect x="257.30" y="23.90" width="16.20" height="0.8" fill="#cfd3dc"/><rect x="257.30" y="9.30" width="0.8" height="15.40" fill="#cfd3dc"/></svg>
<svg style="left:260.5px;top:13px" width="10" height="8" viewBox="0 0 10 8"><path d="M0.3 4 L4.3 0.2 L4.3 2.8 L9.2 2.8 L9.2 5.2 L4.3 5.2 L4.3 7.8 Z" fill="#a6a9b1"/></svg>
<div class="t " style="left:277px;top:3px;transform:translate(0.00px,0.40px) scaleX(0.925) rotate(.03deg);">Selected object:</div>
<svg style="left:0;top:0" width="998" height="489" viewBox="0 0 998 489"><rect x="277.00" y="13.00" width="730.00" height="11.80" fill="#f5f6f9"/><rect x="277.00" y="13.00" width="730.00" height="0.9" fill="#bcc1ce"/><rect x="1006.10" y="13.00" width="0.9" height="11.80" fill="#bcc1ce"/><rect x="277.00" y="23.90" width="730.00" height="0.9" fill="#bcc1ce"/><rect x="277.00" y="13.00" width="0.9" height="11.80" fill="#bcc1ce"/></svg>
<div class="t " style="left:279px;top:14px;transform:translate(0.50px,0.10px) scaleX(0.925) rotate(.03deg);">Aliases.Intpetro.LogsMain.TPanel_21083178.TFrmDBTreeBrowser_21083178.TPanel_21083178</div>
<svg style="left:0;top:0" width="998" height="489" viewBox="0 0 998 489"><rect x="296.50" y="30.60" width="25.00" height="14.20" fill="#eef0f4"/><rect x="296.50" y="30.60" width="25.00" height="0.8" fill="#bcc1ce"/><rect x="320.70" y="30.60" width="0.8" height="14.20" fill="#bcc1ce"/><rect x="296.50" y="30.60" width="0.8" height="14.20" fill="#bcc1ce"/><rect x="321.50" y="30.60" width="33.00" height="14.20" fill="#eef0f4"/><rect x="321.50" y="30.60" width="33.00" height="0.8" fill="#bcc1ce"/><rect x="353.70" y="30.60" width="0.8" height="14.20" fill="#bcc1ce"/><rect x="257.50" y="44.40" width="408.00" height="396.00" fill="#fff"/><rect x="257.50" y="44.40" width="408.00" height="0.9" fill="#bcc1ce"/><rect x="664.60" y="44.40" width="0.9" height="396.00" fill="#bcc1ce"/><rect x="257.50" y="439.50" width="408.00" height="0.9" fill="#bcc1ce"/><rect x="257.50" y="44.40" width="0.9" height="396.00" fill="#bcc1ce"/><rect x="257.50" y="30.00" width="39.30" height="15.40" fill="#fff"/><rect x="257.50" y="30.00" width="39.30" height="0.9" fill="#bcc1ce"/><rect x="295.90" y="30.00" width="0.9" height="15.40" fill="#bcc1ce"/><rect x="257.50" y="30.00" width="0.9" height="15.40" fill="#bcc1ce"/></svg>
<div class="t " style="left:262px;top:33px;transform:translate(0.50px,0.40px) scaleX(0.925) rotate(.03deg);color:#333">Properties</div>
<div class="t " style="left:300px;top:33px;transform:translate(0.50px,0.90px) scaleX(0.925) rotate(.03deg);color:#333">Fields</div>
<div class="t " style="left:326px;top:33px;transform:translate(0.00px,0.90px) scaleX(0.925) rotate(.03deg);color:#333">Methods</div>
<svg style="left:0;top:0" width="998" height="489" viewBox="0 0 998 489"><rect x="580.40" y="29.50" width="85.00" height="12.00" fill="#fff"/><rect x="580.40" y="29.50" width="85.00" height="0.9" fill="#b9bdc9"/><rect x="664.50" y="29.50" width="0.9" height="12.00" fill="#b9bdc9"/><rect x="580.40" y="40.60" width="85.00" height="0.9" fill="#b9bdc9"/><rect x="580.40" y="29.50" width="0.9" height="12.00" fill="#b9bdc9"/></svg>
<div class="t " style="left:581px;top:31px;transform:translate(0.30px,0.30px) scaleX(0.925) rotate(.03deg);font-style:italic;color:#3a3a3a">Search</div>
<svg style="left:655px;top:31.6px" width="9" height="9" viewBox="0 0 9 9"><circle cx="5.4" cy="3.4" r="2.2" fill="none" stroke="#444" stroke-width="0.9"/><path d="M3.8 5 L1.2 7.8" stroke="#444" stroke-width="1.1" fill="none"/></svg>
<div class="t b" style="left:264px;top:48px;transform:translate(0.00px,0.80px) scaleX(0.925) rotate(.03deg);font-size:7.25px;color:#111">Advanced view</div>
<div class="t " style="left:328px;top:48px;transform:translate(0.00px,0.80px) scaleX(0.9) rotate(.03deg);color:#1f7fc0;text-decoration:underline">View basic members (Basic view)</div>
<svg style="left:0;top:0" width="998" height="489" viewBox="0 0 998 489"><rect x="258.40" y="59.80" width="397.00" height="1.20" fill="#b9becd"/><rect x="655.00" y="59.80" width="10.00" height="1.20" fill="#d5d8e2"/><rect x="655.20" y="61.20" width="9.30" height="378.40" fill="#fcfcfd"/><rect x="656.40" y="70.10" width="6.60" height="79.80" fill="#b5bacb"/></svg>
<svg style="left:0;top:0" width="998" height="489" viewBox="0 0 998 489"><rect x="258.40" y="61.00" width="397.10" height="9.42" fill="#f3f4f7"/><rect x="258.40" y="70.42" width="397.10" height="0.80" fill="#dfe1e7"/><rect x="267.60" y="61.30" width="30.80" height="8.62" fill="#dcdde1" stroke="#777" stroke-width="0.5" stroke-dasharray="0.6 0.6"/><rect x="258.40" y="71.22" width="85.80" height="10.22" fill="#f3f4f7"/><rect x="266.80" y="80.54" width="388.70" height="0.90" fill="#d6d8de"/><rect x="258.40" y="81.44" width="85.80" height="10.22" fill="#f3f4f7"/><rect x="266.80" y="90.76" width="388.70" height="0.90" fill="#d6d8de"/><rect x="258.40" y="91.66" width="85.80" height="10.22" fill="#f3f4f7"/><rect x="266.80" y="100.98" width="388.70" height="0.90" fill="#d6d8de"/><rect x="258.40" y="101.88" width="85.80" height="10.22" fill="#f3f4f7"/><rect x="266.80" y="111.20" width="388.70" height="0.90" fill="#d6d8de"/><rect x="258.40" y="112.10" width="85.80" height="10.22" fill="#f3f4f7"/><rect x="266.80" y="121.42" width="388.70" height="0.90" fill="#d6d8de"/><rect x="258.40" y="122.32" width="85.80" height="10.22" fill="#f3f4f7"/><rect x="266.80" y="131.64" width="388.70" height="0.90" fill="#d6d8de"/><rect x="258.40" y="132.54" width="85.80" height="17.60" fill="#f3f4f7"/><rect x="266.80" y="149.24" width="388.70" height="0.90" fill="#d6d8de"/><rect x="258.40" y="150.14" width="85.80" height="10.22" fill="#f3f4f7"/><rect x="266.80" y="159.46" width="388.70" height="0.90" fill="#d6d8de"/><rect x="258.40" y="160.36" width="85.80" height="10.22" fill="#f3f4f7"/><rect x="266.80" y="169.68" width="388.70" height="0.90" fill="#d6d8de"/><rect x="258.40" y="170.58" width="85.80" height="10.22" fill="#f3f4f7"/><rect x="266.80" y="179.90" width="388.70" height="0.90" fill="#d6d8de"/><rect x="258.40" y="180.80" width="85.80" height="10.22" fill="#f3f4f7"/><rect x="266.80" y="190.12" width="388.70" height="0.90" fill="#d6d8de"/><rect x="258.40" y="191.02" width="85.80" height="10.22" fill="#f3f4f7"/><rect x="266.80" y="200.34" width="388.70" height="0.90" fill="#d6d8de"/><rect x="258.40" y="201.24" width="85.80" height="10.22" fill="#f3f4f7"/><rect x="266.80" y="210.56" width="388.70" height="0.90" fill="#d6d8de"/><rect x="258.40" y="211.46" width="85.80" height="10.22" fill="#f3f4f7"/><rect x="266.80" y="220.78" width="388.70" height="0.90" fill="#d6d8de"/><rect x="258.40" y="221.68" width="85.80" height="10.22" fill="#f3f4f7"/><rect x="266.80" y="231.00" width="388.70" height="0.90" fill="#d6d8de"/><rect x="258.40" y="231.90" width="85.80" height="10.22" fill="#f3f4f7"/><rect x="266.80" y="241.22" width="388.70" height="0.90" fill="#d6d8de"/><rect x="258.40" y="242.12" width="85.80" height="10.22" fill="#f3f4f7"/><rect x="266.80" y="251.44" width="388.70" height="0.90" fill="#d6d8de"/><rect x="258.40" y="252.34" width="85.80" height="10.22" fill="#f3f4f7"/><rect x="266.80" y="261.66" width="388.70" height="0.90" fill="#d6d8de"/><rect x="258.40" y="262.56" width="85.80" height="10.22" fill="#f3f4f7"/><rect x="266.80" y="271.88" width="388.70" height="0.90" fill="#d6d8de"/><rect x="258.40" y="272.78" width="85.80" height="10.22" fill="#f3f4f7"/><rect x="266.80" y="282.10" width="388.70" height="0.90" fill="#d6d8de"/><rect x="258.40" y="283.00" width="85.80" height="10.22" fill="#f3f4f7"/><rect x="266.80" y="292.32" width="388.70" height="0.90" fill="#d6d8de"/><rect x="258.40" y="293.22" width="85.80" height="10.22" fill="#f3f4f7"/><rect x="266.80" y="302.54" width="388.70" height="0.90" fill="#d6d8de"/><rect x="258.40" y="303.44" width="85.80" height="10.22" fill="#f3f4f7"/><rect x="266.80" y="312.76" width="388.70" height="0.90" fill="#d6d8de"/><rect x="258.40" y="313.66" width="85.80" height="10.22" fill="#f3f4f7"/><rect x="266.80" y="322.98" width="388.70" height="0.90" fill="#d6d8de"/><rect x="258.40" y="323.88" width="85.80" height="10.22" fill="#f3f4f7"/><rect x="266.80" y="333.20" width="388.70" height="0.90" fill="#d6d8de"/><rect x="258.40" y="334.10" width="85.80" height="10.22" fill="#f3f4f7"/><rect x="266.80" y="343.42" width="388.70" height="0.90" fill="#d6d8de"/><rect x="258.40" y="344.32" width="85.80" height="10.22" fill="#f3f4f7"/><rect x="266.80" y="353.64" width="388.70" height="0.90" fill="#d6d8de"/><rect x="258.40" y="354.54" width="85.80" height="10.22" fill="#f3f4f7"/><rect x="266.80" y="363.86" width="388.70" height="0.90" fill="#d6d8de"/><rect x="258.40" y="364.76" width="397.10" height="9.42" fill="#f3f4f7"/><rect x="258.40" y="374.18" width="397.10" height="0.80" fill="#dfe1e7"/><rect x="258.40" y="374.98" width="85.80" height="10.22" fill="#f3f4f7"/><rect x="266.80" y="384.30" width="388.70" height="0.90" fill="#d6d8de"/><rect x="258.40" y="385.20" width="85.80" height="10.22" fill="#f3f4f7"/><rect x="266.80" y="394.52" width="388.70" height="0.90" fill="#d6d8de"/><rect x="258.40" y="395.42" width="85.80" height="10.22" fill="#f3f4f7"/><rect x="266.80" y="404.74" width="388.70" height="0.90" fill="#d6d8de"/><rect x="258.40" y="405.64" width="397.10" height="9.42" fill="#f3f4f7"/><rect x="258.40" y="415.06" width="397.10" height="0.80" fill="#dfe1e7"/><rect x="258.40" y="415.86" width="85.80" height="10.22" fill="#f3f4f7"/><rect x="266.80" y="425.18" width="388.70" height="0.90" fill="#d6d8de"/><rect x="258.40" y="426.08" width="85.80" height="10.22" fill="#f3f4f7"/><rect x="266.80" y="435.40" width="388.70" height="0.90" fill="#d6d8de"/><rect x="258.40" y="436.30" width="397.10" height="3.30" fill="#f1f2f5"/></svg>
<div class="t b" style="left:268px;top:61px;transform:translate(0.60px,0.41px) scaleX(0.925) rotate(.03deg);font-size:7.25px;color:#111">Standard</div>
<div class="t " style="left:276px;top:71px;transform:translate(0.20px,0.63px) scaleX(0.925) rotate(.03deg);">_NewEnum</div>
<div class="t " style="left:344px;top:71px;transform:translate(0.90px,0.63px) scaleX(0.925) rotate(.03deg);">(Enumerator)</div>
<div class="t " style="left:276px;top:81px;transform:translate(0.20px,0.85px) scaleX(0.925) rotate(.03deg);">ChildCount</div>
<div class="t " style="left:344px;top:81px;transform:translate(0.90px,0.85px) scaleX(0.925) rotate(.03deg);">8</div>
<div class="t " style="left:276px;top:92px;transform:translate(0.20px,0.07px) scaleX(0.925) rotate(.03deg);">ControlId</div>
<div class="t " style="left:344px;top:92px;transform:translate(0.90px,0.07px) scaleX(0.925) rotate(.03deg);">69186</div>
<div class="t " style="left:276px;top:102px;transform:translate(0.20px,0.29px) scaleX(0.925) rotate(.03deg);">Enabled</div>
<div class="t " style="left:344px;top:102px;transform:translate(0.90px,0.29px) scaleX(0.925) rotate(.03deg);">True</div>
<div class="t " style="left:276px;top:112px;transform:translate(0.20px,0.51px) scaleX(0.925) rotate(.03deg);">Exists</div>
<div class="t " style="left:344px;top:112px;transform:translate(0.90px,0.51px) scaleX(0.925) rotate(.03deg);">True</div>
<div class="t " style="left:276px;top:122px;transform:translate(0.20px,0.73px) scaleX(0.925) rotate(.03deg);">Focused</div>
<div class="t " style="left:344px;top:122px;transform:translate(0.90px,0.73px) scaleX(0.925) rotate(.03deg);">False</div>
<div class="t " style="left:276px;top:136px;transform:translate(0.20px,0.64px) scaleX(0.925) rotate(.03deg);">FullName</div>
<div class="t " style="left:344px;top:132px;transform:translate(0.90px,0.94px) scaleX(0.933) rotate(.03deg);">Sys.Process(&quot;Intpetro&quot;).UIAObject(&quot;IP_2025_Blue_Cat_1_Original_database_Blue_Cat_9713_10043_ft_&quot;).VCLN</div>
<div class="t " style="left:344px;top:140px;transform:translate(0.90px,0.34px) scaleX(0.903) rotate(.03deg);">ETObject(&quot;LeftDockPanel&quot;).VCLNETObject(&quot;FrmDBTreeBrowser&quot;).VCLNETObject(&quot;Panel1&quot;)</div>
<div class="t " style="left:276px;top:150px;transform:translate(0.20px,0.55px) scaleX(0.925) rotate(.03deg);">Handle</div>
<div class="t " style="left:344px;top:150px;transform:translate(0.90px,0.55px) scaleX(0.925) rotate(.03deg);">69186</div>
<div class="t " style="left:276px;top:160px;transform:translate(0.20px,0.77px) scaleX(0.925) rotate(.03deg);">Height</div>
<div class="t " style="left:344px;top:160px;transform:translate(0.90px,0.77px) scaleX(0.925) rotate(.03deg);">32</div>
<div class="t " style="left:276px;top:170px;transform:translate(0.20px,0.99px) scaleX(0.925) rotate(.03deg);">Id</div>
<div class="t " style="left:344px;top:170px;transform:translate(0.90px,0.99px) scaleX(0.925) rotate(.03deg);">69186</div>
<div class="t " style="left:276px;top:181px;transform:translate(0.20px,0.21px) scaleX(0.925) rotate(.03deg);">Index</div>
<div class="t " style="left:344px;top:181px;transform:translate(0.90px,0.21px) scaleX(0.925) rotate(.03deg);">1</div>
<div class="t " style="left:276px;top:191px;transform:translate(0.20px,0.43px) scaleX(0.925) rotate(.03deg);">Left</div>
<div class="t " style="left:344px;top:191px;transform:translate(0.90px,0.43px) scaleX(0.925) rotate(.03deg);">0</div>
<div class="t " style="left:276px;top:201px;transform:translate(0.20px,0.65px) scaleX(0.925) rotate(.03deg);">MappedName</div>
<div class="t " style="left:344px;top:201px;transform:translate(0.90px,0.65px) scaleX(0.92) rotate(.03deg);">Aliases.Intpetro.LogsMain.TPanel_21083178.TFrmDBTreeBrowser_21083178.TPanel_21083178</div>
<div class="t " style="left:276px;top:211px;transform:translate(0.20px,0.87px) scaleX(0.925) rotate(.03deg);">Name</div>
<div class="t " style="left:344px;top:211px;transform:translate(0.90px,0.87px) scaleX(0.903) rotate(.03deg);">VCLNETObject(&quot;Panel1&quot;)</div>
<div class="t " style="left:276px;top:222px;transform:translate(0.20px,0.09px) scaleX(0.925) rotate(.03deg);">NativeClrObject</div>
<div class="t " style="left:344px;top:222px;transform:translate(0.90px,0.09px) scaleX(0.925) rotate(.03deg);">(Object)</div>
<div class="t " style="left:276px;top:232px;transform:translate(0.20px,0.31px) scaleX(0.925) rotate(.03deg);">NativeUIAObject</div>
<div class="t " style="left:344px;top:232px;transform:translate(0.90px,0.31px) scaleX(0.925) rotate(.03deg);">(Object)</div>
<div class="t " style="left:276px;top:242px;transform:translate(0.20px,0.53px) scaleX(0.925) rotate(.03deg);">Parent</div>
<div class="t " style="left:344px;top:242px;transform:translate(0.90px,0.53px) scaleX(0.925) rotate(.03deg);">(Object)</div>
<div class="t " style="left:276px;top:252px;transform:translate(0.20px,0.75px) scaleX(0.925) rotate(.03deg);">ScreenLeft</div>
<div class="t " style="left:344px;top:252px;transform:translate(0.90px,0.75px) scaleX(0.925) rotate(.03deg);">473</div>
<div class="t " style="left:276px;top:262px;transform:translate(0.20px,0.97px) scaleX(0.925) rotate(.03deg);">ScreenTop</div>
<div class="t " style="left:344px;top:262px;transform:translate(0.90px,0.97px) scaleX(0.925) rotate(.03deg);">160</div>
<div class="t " style="left:276px;top:273px;transform:translate(0.20px,0.19px) scaleX(0.925) rotate(.03deg);">Top</div>
<div class="t " style="left:344px;top:273px;transform:translate(0.90px,0.19px) scaleX(0.925) rotate(.03deg);">0</div>
<div class="t " style="left:276px;top:283px;transform:translate(0.20px,0.41px) scaleX(0.925) rotate(.03deg);">Unicode</div>
<div class="t " style="left:344px;top:283px;transform:translate(0.90px,0.41px) scaleX(0.925) rotate(.03deg);">True</div>
<div class="t " style="left:276px;top:293px;transform:translate(0.20px,0.63px) scaleX(0.925) rotate(.03deg);">Visible</div>
<div class="t " style="left:344px;top:293px;transform:translate(0.90px,0.63px) scaleX(0.925) rotate(.03deg);">True</div>
<div class="t " style="left:276px;top:303px;transform:translate(0.20px,0.85px) scaleX(0.925) rotate(.03deg);">VisibleOnScreen</div>
<div class="t " style="left:344px;top:303px;transform:translate(0.90px,0.85px) scaleX(0.925) rotate(.03deg);">True</div>
<div class="t " style="left:276px;top:314px;transform:translate(0.20px,0.07px) scaleX(0.925) rotate(.03deg);">Width</div>
<div class="t " style="left:344px;top:314px;transform:translate(0.90px,0.07px) scaleX(0.925) rotate(.03deg);">247</div>
<div class="t " style="left:276px;top:324px;transform:translate(0.20px,0.29px) scaleX(0.925) rotate(.03deg);">WndCaption</div>
<div class="t " style="left:344px;top:324px;transform:translate(0.90px,0.29px) scaleX(0.925) rotate(.03deg);"></div>
<div class="t " style="left:276px;top:334px;transform:translate(0.20px,0.51px) scaleX(0.925) rotate(.03deg);">WndClass</div>
<div class="t " style="left:344px;top:334px;transform:translate(0.90px,0.51px) scaleX(0.925) rotate(.03deg);">TPanel.21083178</div>
<div class="t " style="left:276px;top:344px;transform:translate(0.20px,0.73px) scaleX(0.925) rotate(.03deg);">WndStyles</div>
<div class="t " style="left:344px;top:344px;transform:translate(0.90px,0.73px) scaleX(0.925) rotate(.03deg);">1442840576</div>
<div class="t " style="left:276px;top:354px;transform:translate(0.20px,0.95px) scaleX(0.925) rotate(.03deg);">WndStylesEx</div>
<div class="t " style="left:344px;top:354px;transform:translate(0.90px,0.95px) scaleX(0.925) rotate(.03deg);">65536</div>
<div class="t b" style="left:268px;top:365px;transform:translate(0.60px,0.17px) scaleX(0.925) rotate(.03deg);font-size:7.25px;color:#111">Extended</div>
<div class="t " style="left:276px;top:375px;transform:translate(0.20px,0.39px) scaleX(0.925) rotate(.03deg);">HScroll</div>
<div class="t " style="left:344px;top:375px;transform:translate(0.90px,0.39px) scaleX(0.925) rotate(.03deg);">(Object)</div>
<div class="t " style="left:276px;top:385px;transform:translate(0.20px,0.61px) scaleX(0.925) rotate(.03deg);">PopupMenu</div>
<div class="t " style="left:344px;top:385px;transform:translate(0.90px,0.61px) scaleX(0.925) rotate(.03deg);">(Null Object)</div>
<div class="t " style="left:276px;top:395px;transform:translate(0.20px,0.83px) scaleX(0.925) rotate(.03deg);">VScroll</div>
<div class="t " style="left:344px;top:395px;transform:translate(0.90px,0.83px) scaleX(0.925) rotate(.03deg);">(Object)</div>
<div class="t b" style="left:268px;top:406px;transform:translate(0.60px,0.05px) scaleX(0.925) rotate(.03deg);font-size:7.25px;color:#111">.NET</div>
<div class="t " style="left:276px;top:416px;transform:translate(0.20px,0.27px) scaleX(0.925) rotate(.03deg);">Action</div>
<div class="t " style="left:344px;top:416px;transform:translate(0.90px,0.27px) scaleX(0.925) rotate(.03deg);">(Null Object)</div>
<div class="t " style="left:276px;top:426px;transform:translate(0.20px,0.49px) scaleX(0.925) rotate(.03deg);">Align</div>
<div class="t " style="left:344px;top:426px;transform:translate(0.90px,0.49px) scaleX(0.925) rotate(.03deg);">alTop</div>
<svg style="left:0;top:0" width="998" height="489" viewBox="0 0 998 489"><path d="M658.6 66.2 L660 64.6 L661.4 66.2 Z" fill="#666"/><path d="M260.20 64.91 L262.60 67.41 L265.00 64.91" fill="none" stroke="#555" stroke-width="0.8"/><rect x="646.90" y="75.23" width="1.0" height="1.9" fill="#a2a2a6"/><rect x="648.90" y="75.23" width="1.0" height="1.9" fill="#a2a2a6"/><rect x="650.90" y="75.23" width="1.0" height="1.9" fill="#a2a2a6"/><rect x="646.90" y="205.25" width="1.0" height="1.9" fill="#a2a2a6"/><rect x="648.90" y="205.25" width="1.0" height="1.9" fill="#a2a2a6"/><rect x="650.90" y="205.25" width="1.0" height="1.9" fill="#a2a2a6"/><path d="M640 203.95 L642.4 206.35 L640 208.75 L637.6 206.35 Z" fill="#3a5fd0"/><rect x="639.5" y="205.85" width="1" height="1" fill="#fff"/><rect x="646.90" y="225.69" width="1.0" height="1.9" fill="#a2a2a6"/><rect x="648.90" y="225.69" width="1.0" height="1.9" fill="#a2a2a6"/><rect x="650.90" y="225.69" width="1.0" height="1.9" fill="#a2a2a6"/><rect x="646.90" y="235.91" width="1.0" height="1.9" fill="#a2a2a6"/><rect x="648.90" y="235.91" width="1.0" height="1.9" fill="#a2a2a6"/><rect x="650.90" y="235.91" width="1.0" height="1.9" fill="#a2a2a6"/><rect x="646.90" y="246.13" width="1.0" height="1.9" fill="#a2a2a6"/><rect x="648.90" y="246.13" width="1.0" height="1.9" fill="#a2a2a6"/><rect x="650.90" y="246.13" width="1.0" height="1.9" fill="#a2a2a6"/><circle cx="271.6" cy="328.99" r="1.15" fill="none" stroke="#5a5a5a" stroke-width="0.7"/><path d="M260.20 368.67 L262.60 371.17 L265.00 368.67" fill="none" stroke="#555" stroke-width="0.8"/><rect x="646.90" y="378.99" width="1.0" height="1.9" fill="#a2a2a6"/><rect x="648.90" y="378.99" width="1.0" height="1.9" fill="#a2a2a6"/><rect x="650.90" y="378.99" width="1.0" height="1.9" fill="#a2a2a6"/><rect x="646.90" y="389.21" width="1.0" height="1.9" fill="#a2a2a6"/><rect x="648.90" y="389.21" width="1.0" height="1.9" fill="#a2a2a6"/><rect x="650.90" y="389.21" width="1.0" height="1.9" fill="#a2a2a6"/><rect x="646.90" y="399.43" width="1.0" height="1.9" fill="#a2a2a6"/><rect x="648.90" y="399.43" width="1.0" height="1.9" fill="#a2a2a6"/><rect x="650.90" y="399.43" width="1.0" height="1.9" fill="#a2a2a6"/><path d="M260.20 409.55 L262.60 412.05 L265.00 409.55" fill="none" stroke="#555" stroke-width="0.8"/><circle cx="271.6" cy="420.97" r="1.15" fill="none" stroke="#5a5a5a" stroke-width="0.7"/><rect x="646.90" y="419.87" width="1.0" height="1.9" fill="#a2a2a6"/><rect x="648.90" y="419.87" width="1.0" height="1.9" fill="#a2a2a6"/><rect x="650.90" y="419.87" width="1.0" height="1.9" fill="#a2a2a6"/><circle cx="271.6" cy="431.19" r="1.15" fill="none" stroke="#5a5a5a" stroke-width="0.7"/></svg>
<svg style="left:0;top:0" width="998" height="489" viewBox="0 0 998 489"><rect x="257.50" y="445.80" width="408.00" height="50.00" fill="#f5f6f9"/><rect x="257.50" y="445.80" width="408.00" height="0.9" fill="#bcc1ce"/><rect x="664.60" y="445.80" width="0.9" height="50.00" fill="#bcc1ce"/><rect x="257.50" y="494.90" width="408.00" height="0.9" fill="#bcc1ce"/><rect x="257.50" y="445.80" width="0.9" height="50.00" fill="#bcc1ce"/><rect x="258.40" y="446.70" width="406.20" height="10.20" fill="#eceef3"/><rect x="258.40" y="456.00" width="406.20" height="0.9" fill="#c6cad6"/></svg>
<div class="t " style="left:265px;top:446px;transform:translate(0.50px,0.90px) scaleX(0.925) rotate(.03deg);color:#333">Description</div>
<svg style="left:0;top:0" width="998" height="489" viewBox="0 0 998 489"><rect x="670.20" y="29.20" width="340.00" height="470.00" fill="#fff"/><rect x="670.20" y="29.20" width="340.00" height="0.9" fill="#bcc1ce"/><rect x="1009.30" y="29.20" width="0.9" height="470.00" fill="#bcc1ce"/><rect x="670.20" y="498.30" width="340.00" height="0.9" fill="#bcc1ce"/><rect x="670.20" y="29.20" width="0.9" height="470.00" fill="#bcc1ce"/><rect x="672.60" y="45.50" width="330.00" height="450.00" fill="#b7bccb"/><rect x="671.00" y="45.50" width="1.70" height="450.00" fill="#c4c8d5"/><rect x="671.00" y="45.00" width="330.00" height="0.90" fill="#a9aebd"/></svg>
<svg style="left:0;top:0" width="998" height="489" viewBox="0 0 998 489"><rect x="673.2" y="34.20" width="0.9" height="0.9" fill="#777"/><rect x="673.2" y="36.50" width="0.9" height="0.9" fill="#777"/><rect x="673.2" y="38.80" width="0.9" height="0.9" fill="#777"/><rect x="673.2" y="41.10" width="0.9" height="0.9" fill="#777"/><circle cx="682.2" cy="36.3" r="3.0" fill="none" stroke="#4d4d4d" stroke-width="1.15"/><path d="M680.3000000000001 38.8 L679.0 42.0" stroke="#4d4d4d" stroke-width="1.3" fill="none"/><circle cx="685.6" cy="40.1" r="2.6" fill="#1b96e0"/><path d="M684.3000000000001 40.1 H686.9000000000001 M685.6 38.8 V41.4" stroke="#fff" stroke-width="0.9"/><circle cx="695.8" cy="36.3" r="3.0" fill="none" stroke="#4d4d4d" stroke-width="1.15"/><path d="M693.9 38.8 L692.5999999999999 42.0" stroke="#4d4d4d" stroke-width="1.3" fill="none"/><circle cx="699.1999999999999" cy="40.1" r="2.6" fill="#1b96e0"/><path d="M697.9 40.1 H700.5" stroke="#fff" stroke-width="0.9"/><circle cx="709.0" cy="36.3" r="3.0" fill="none" stroke="#4d4d4d" stroke-width="1.15"/><path d="M707.1 38.8 L705.8 42.0" stroke="#4d4d4d" stroke-width="1.3" fill="none"/><circle cx="712.4" cy="40.1" r="2.6" fill="#d31a35"/><rect x="711.5" y="39.2" width="1.8" height="1.8" fill="#fff"/><rect x="716.9" y="32.1" width="12.8" height="12" fill="#d6e8f2" stroke="#a9c9de" stroke-width="0.7"/><path d="M718.80 33.80 L722.30 33.80 L722.30 35.00 L720.00 37.30 L718.80 37.30 Z" fill="#1b96e0"/><path d="M718.80 42.60 L722.30 42.60 L722.30 41.40 L720.00 39.10 L718.80 39.10 Z" fill="#1b96e0"/><path d="M727.60 33.80 L724.10 33.80 L724.10 35.00 L726.40 37.30 L727.60 37.30 Z" fill="#1b96e0"/><path d="M727.60 42.60 L724.10 42.60 L724.10 41.40 L726.40 39.10 L727.60 39.10 Z" fill="#1b96e0"/><path d="M720.5 35.5 L725.9000000000001 40.900000000000006 M725.9000000000001 35.5 L720.5 40.900000000000006" stroke="#5d5d5d" stroke-width="1.0"/></svg>
<svg style="left:0;top:0" width="998" height="489" viewBox="0 0 998 489"><rect x="672.60" y="242.90" width="330.00" height="51.20" fill="#474a54"/><path d="M682.90 245.90 H719.90 A0.0 0.0 0 0 1 719.90 245.90 V277.30 A2.5 2.5 0 0 1 717.40 279.80 H685.40 A2.5 2.5 0 0 1 682.90 277.30 V245.90 A0.0 0.0 0 0 1 682.90 245.90 Z" fill="#cce6fe"/></svg>
<svg style="left:0;top:0" width="998" height="489" viewBox="0 0 998 489"><circle cx="697.40" cy="251.61" r="1.61" fill="#c6c4c4"/><rect x="696.56" y="252.45" width="1.68" height="14.35" fill="#c6c4c4"/><path d="M695.86 254.48 H698.94 L705.90 265.68 H688.90 Z" fill="#c6c4c4"/><rect x="694.95" y="259.24" width="1.61" height="1.05" fill="#cce6fe"/><rect x="698.24" y="259.24" width="1.61" height="1.05" fill="#cce6fe"/><rect x="694.04" y="261.62" width="2.52" height="1.12" fill="#cce6fe"/><rect x="698.24" y="261.62" width="2.52" height="1.12" fill="#cce6fe"/><circle cx="705.60" cy="253.48" r="2.28" fill="#fff"/><rect x="704.41" y="254.67" width="2.38" height="20.33" fill="#fff"/><path d="M703.42 257.55 H707.78 L714.50 273.41 H696.70 Z" fill="#fff"/><rect x="702.13" y="264.29" width="2.28" height="1.49" fill="#cce6fe"/><rect x="706.79" y="264.29" width="2.28" height="1.49" fill="#cce6fe"/><rect x="700.84" y="267.66" width="3.57" height="1.59" fill="#cce6fe"/><rect x="706.79" y="267.66" width="3.57" height="1.59" fill="#cce6fe"/><circle cx="739.80" cy="253.51" r="2.31" fill="#fff"/><rect x="738.59" y="254.71" width="2.41" height="20.59" fill="#fff"/><path d="M737.59 257.63 H742.01 L749.10 273.69 H730.50 Z" fill="#fff"/><rect x="736.29" y="264.45" width="2.31" height="1.51" fill="#474a54"/><rect x="741.00" y="264.45" width="2.31" height="1.51" fill="#474a54"/><rect x="734.98" y="267.87" width="3.62" height="1.61" fill="#474a54"/><rect x="741.00" y="267.87" width="3.62" height="1.61" fill="#474a54"/><rect x="764.6" y="250" width="25.2" height="25" rx="2.5" fill="none" stroke="#fff" stroke-width="0.9"/><circle cx="777.20" cy="253.84" r="2.24" fill="#fff"/><rect x="776.03" y="255.01" width="2.34" height="19.99" fill="#fff"/><path d="M775.06 257.84 H779.35 L786.20 273.44 H768.20 Z" fill="#fff"/><rect x="773.79" y="264.47" width="2.24" height="1.46" fill="#474a54"/><rect x="778.37" y="264.47" width="2.24" height="1.46" fill="#474a54"/><rect x="772.52" y="267.78" width="3.51" height="1.56" fill="#474a54"/><rect x="778.37" y="267.78" width="3.51" height="1.56" fill="#474a54"/><path d="M805.8 254.9 H825.4 L818 263.6 V270.6 H813.4 V263.6 Z" fill="#fff"/><rect x="852.20" y="254.40" width="4.0" height="16.4" fill="#fff" transform="rotate(0 854.2 262.6)"/><rect x="852.60" y="255.00" width="3.2" height="15.2" fill="#fff" transform="rotate(45 854.2 262.6)"/><rect x="852.20" y="254.40" width="4.0" height="16.4" fill="#fff" transform="rotate(90 854.2 262.6)"/><rect x="852.60" y="255.00" width="3.2" height="15.2" fill="#fff" transform="rotate(135 854.2 262.6)"/><circle cx="854.2" cy="262.6" r="5.6" fill="#fff"/><rect x="852.6" y="261.0" width="3.2" height="3.2" rx="0.5" fill="#474a54"/><path d="M893.4 253.7 C889.4 253.2 887.2 255.6 887.4 260.6" fill="none" stroke="#fff" stroke-width="1.7"/><path d="M880.8 260.4 H893.2 L887.2 267.3 Z" fill="#fff"/><path d="M892.6 272.7 C896.6 273 898.8 270 898.6 265" fill="none" stroke="#fff" stroke-width="1.7"/><path d="M892.6 265.6 L898.5 258.7 L904.6 265.6 Z" fill="#fff"/></svg>
<div class="a" style="left:439.00px;top:323.00px;width:451.40px;height:200.00px;background:#565f7d;border-radius:3.5px 3.5px 0 0;box-shadow:0 3px 12px 1px rgba(40,45,70,0.42)"></div>
<svg style="left:0;top:0" width="998" height="489" viewBox="0 0 998 489"><rect x="439.00" y="354.80" width="451.40" height="2.10" fill="#fd8108"/><rect x="439.00" y="356.80" width="451.40" height="140.00" fill="#474a54"/><rect x="484.00" y="386.40" width="140.60" height="110.00" fill="#fff"/><rect x="624.60" y="357.00" width="2.40" height="140.00" fill="#dfe1e8"/><rect x="627.00" y="368.40" width="261.60" height="130.00" fill="#c3c8d6"/><rect x="888.60" y="368.40" width="1.80" height="130.00" fill="#e4e6ed"/><rect x="627.00" y="368.00" width="263.40" height="0.80" fill="#3c3f48"/><rect x="640.00" y="357.30" width="61.70" height="10.80" fill="#f88012"/></svg>
<div class="t " style="left:641px;top:358px;transform:translate(0.40px,0.10px) scaleX(0.89) rotate(.03deg);font-size:7.6px;color:#fff3e2">(Work Area)</div>
<svg style="left:0;top:0" width="998" height="489" viewBox="0 0 998 489"><path d="M511.90 330.40 H561.90 A2.5 2.5 0 0 1 564.40 332.90 V348.60 A2.5 2.5 0 0 1 561.90 351.10 H511.90 A2.5 2.5 0 0 1 509.40 348.60 V332.90 A2.5 2.5 0 0 1 511.90 330.40 Z" fill="none" stroke="#6f7895" stroke-width="0.8"/></svg>
<div class="t c " style="left:464px;top:324px;transform:translate(0.00px,0.90px) scaleX(0.9) rotate(.03deg);width:120px;font-size:7.6px;color:#fff"><span style="background:#565f7d;padding:0 1.6px">Well</span></div>
<div class="t c " style="left:473px;top:336px;transform:translate(0.00px,0.00px) scaleX(0.9) rotate(.03deg);width:120px;font-size:9px;color:#fff">1</div>
<svg style="left:0;top:0" width="998" height="489" viewBox="0 0 998 489"><path d="M597.20 330.40 H667.10 A2.5 2.5 0 0 1 669.60 332.90 V348.60 A2.5 2.5 0 0 1 667.10 351.10 H597.20 A2.5 2.5 0 0 1 594.70 348.60 V332.90 A2.5 2.5 0 0 1 597.20 330.40 Z" fill="none" stroke="#6f7895" stroke-width="0.8"/></svg>
<div class="t c " style="left:569px;top:324px;transform:translate(0.60px,0.90px) scaleX(0.9) rotate(.03deg);width:120px;font-size:7.6px;color:#fff"><span style="background:#565f7d;padding:0 1.6px">Working Input Set</span></div>
<div class="t c " style="left:572px;top:336px;transform:translate(0.70px,0.00px) scaleX(0.9) rotate(.03deg);width:120px;font-size:9px;color:#fff">All</div>
<svg style="left:0;top:0" width="998" height="489" viewBox="0 0 998 489"><path d="M680.20 330.40 H750.50 A2.5 2.5 0 0 1 753.00 332.90 V348.60 A2.5 2.5 0 0 1 750.50 351.10 H680.20 A2.5 2.5 0 0 1 677.70 348.60 V332.90 A2.5 2.5 0 0 1 680.20 330.40 Z" fill="none" stroke="#6f7895" stroke-width="0.8"/></svg>
<div class="t c " style="left:655px;top:324px;transform:translate(0.70px,0.90px) scaleX(0.9) rotate(.03deg);width:120px;font-size:7.6px;color:#fff"><span style="background:#565f7d;padding:0 1.6px">Working Output Set</span></div>
<div class="t c " style="left:655px;top:336px;transform:translate(0.50px,0.00px) scaleX(0.9) rotate(.03deg);width:120px;font-size:9px;color:#fff">All</div>
<div class="t c " style="left:401px;top:374px;transform:translate(0.50px,0.30px) scaleX(0.86) rotate(.03deg);width:120px;font-size:7.4px;color:#fff">Browser</div>
<div class="t c " style="left:401px;top:403px;transform:translate(0.50px,0.90px) scaleX(0.86) rotate(.03deg);width:120px;font-size:7.4px;color:#fff">Database</div>
<div class="t c " style="left:401px;top:433px;transform:translate(0.50px,0.60px) scaleX(0.86) rotate(.03deg);width:120px;font-size:7.4px;color:#fff">Well</div>
<div class="t c " style="left:401px;top:463px;transform:translate(0.50px,0.00px) scaleX(0.86) rotate(.03deg);width:120px;font-size:7.4px;color:#fff">In/Out</div>
<svg style="left:0;top:0" width="998" height="489" viewBox="0 0 998 489"><path d="M488.70 368.30 H500.50 A0.0 0.0 0 0 1 500.50 368.30 V380.00 A0.8 0.8 0 0 1 499.70 380.80 H489.50 A0.8 0.8 0 0 1 488.70 380.00 V368.30 A0.0 0.0 0 0 1 488.70 368.30 Z" fill="#cce6fe"/></svg>
<div class="t " style="left:497px;top:387px;transform:translate(0.60px,0.80px) scaleX(0.866) rotate(.03deg);font-size:7.3px;color:#2a2a2a;-webkit-text-stroke:0.05px">Blue Cat Wells 2025 New</div>
<div class="t b" style="left:506px;top:396px;transform:translate(0.50px,0.90px) scaleX(0.815) rotate(.03deg);font-size:7.3px;color:#1c1c1c;-webkit-text-stroke:0.05px">(1) Blue Cat 1</div>
<div class="t " style="left:506px;top:405px;transform:translate(0.50px,0.97px) scaleX(0.825) rotate(.03deg);font-size:7.3px;color:#2a2a2a;-webkit-text-stroke:0.05px">(2) Blue Cat 2</div>
<div class="t " style="left:506px;top:415px;transform:translate(0.50px,0.04px) scaleX(0.825) rotate(.03deg);font-size:7.3px;color:#2a2a2a;-webkit-text-stroke:0.05px">(3) Blue Cat 3</div>
<div class="t " style="left:506px;top:424px;transform:translate(0.50px,0.11px) scaleX(0.825) rotate(.03deg);font-size:7.3px;color:#2a2a2a;-webkit-text-stroke:0.05px">(4) Blue Cat 4</div>
<div class="t " style="left:506px;top:433px;transform:translate(0.50px,0.18px) scaleX(0.825) rotate(.03deg);font-size:7.3px;color:#2a2a2a;-webkit-text-stroke:0.05px">(5) Blue Cat 5</div>
<div class="t " style="left:506px;top:442px;transform:translate(0.50px,0.25px) scaleX(0.825) rotate(.03deg);font-size:7.3px;color:#2a2a2a;-webkit-text-stroke:0.05px">(6) Blue Cat 6</div>
<div class="t " style="left:506px;top:451px;transform:translate(0.50px,0.32px) scaleX(0.825) rotate(.03deg);font-size:7.3px;color:#2a2a2a;-webkit-text-stroke:0.05px">(7) Blue Cat 7</div>
<div class="t " style="left:506px;top:460px;transform:translate(0.50px,0.39px) scaleX(0.825) rotate(.03deg);font-size:7.3px;color:#2a2a2a;-webkit-text-stroke:0.05px">(8) Blue Cat 8</div>
<div class="t " style="left:506px;top:469px;transform:translate(0.50px,0.46px) scaleX(0.825) rotate(.03deg);font-size:7.3px;color:#2a2a2a;-webkit-text-stroke:0.05px">(9) Blue Cat 9</div>
<div class="t " style="left:506px;top:478px;transform:translate(0.50px,0.53px) scaleX(0.825) rotate(.03deg);font-size:7.3px;color:#2a2a2a;-webkit-text-stroke:0.05px">(10) Blue Cat 10</div>
<svg style="left:0;top:0" width="998" height="489" viewBox="0 0 998 489"><path d="M705.2 359 H710 L713 361.5 V366.5 H705.2 Z" fill="#fff"/><path d="M709.8 359.2 h2.6 v2.4 h-2.6z" fill="#474a54"/><path d="M710.3 360.4 h2.2 M711.4 359.3 v2.2" stroke="#fff" stroke-width="0.7"/><path d="M617.6 359.2 L621.4 363 M621.4 359.2 L617.6 363" stroke="#d8dae0" stroke-width="0.7"/><path d="M453.3 330.6 L462.4 339.2 L453.3 347.8" fill="none" stroke="#f58220" stroke-width="3.9" stroke-linejoin="miter"/><path d="M449 336.5 L451.7 339.2 L449 341.9 L446.3 339.2 Z" fill="#f58220"/><path d="M578.90 333.20 L574.75 344.60 M581.10 333.20 L585.25 344.60" stroke="#fff" stroke-width="1.19" fill="none"/><path d="M573.80 344.60 H586.20" stroke="#fff" stroke-width="1.04"/><path d="M578.62 333.20 H581.38" stroke="#fff" stroke-width="1.14"/><path d="M577.99 335.71 L583.38 339.47 M582.01 335.71 L576.62 339.47 M576.62 339.47 L585.25 344.60 M583.38 339.47 L574.75 344.60" stroke="#fff" stroke-width="0.76" fill="none"/><path d="M784.6 338.6 H790 L791.5 342 H794.8 V345 H783 Z" fill="#fff"/><path d="M792 333.6 a2.4 2.4 0 0 1 2.4 2.4 c0 1.8 -2.4 4.6 -2.4 4.6 s-2.4 -2.8 -2.4 -4.6 a2.4 2.4 0 0 1 2.4 -2.4z" fill="#fff" stroke="#565f7d" stroke-width="0.5"/><circle cx="792" cy="336" r="0.8" fill="#565f7d"/><path d="M809 333.2 H814.6 V334.6 H811 V337.4 H813.6 V338.6 H811 V341 H813.6 V342.2 H811 V343.6 H814.6 V345 H809 Z" fill="#fff"/><path d="M817.4 337 L819.4 339 L817.4 341" fill="none" stroke="#8d94ad" stroke-width="0.6"/><path d="M831 339 H836.8" stroke="#cfd2dc" stroke-width="0.8"/><rect x="853.4" y="336" width="6.2" height="6.2" fill="none" stroke="#e3e5ec" stroke-width="0.8"/><path d="M876.2 336 L882.2 342.2 M882.2 336 L876.2 342.2" stroke="#fff" stroke-width="0.8"/><path d="M460.9 358.4 L454.8 371.2 M460.9 358.4 L463 362.6 M454.4 371.4 H468.2 M466 367.4 L467.8 371.2 M457.2 366.4 L462.6 371.2 M458.6 363.4 L461.4 366.2" stroke="#fff" stroke-width="1.15" fill="none"/><circle cx="464.5" cy="363.6" r="2.7" fill="#474a54" stroke="#fff" stroke-width="0.9"/><circle cx="464.5" cy="363.6" r="1.0" fill="#9da0a8"/><path d="M466.5 365.7 L469.4 368.4" stroke="#fff" stroke-width="1.1"/><path d="M453.4 389.6 H460 L461.2 391 H468.6 V392.6 H456.2 L453.4 400.6 Z" fill="#fff"/><path d="M457 393.4 H470.6 L467.8 402 H453.6 Z" fill="#fff"/><path d="M460.30 418.60 L455.05 431.60 M462.90 418.60 L468.15 431.60" stroke="#fff" stroke-width="1.44" fill="none"/><path d="M453.90 431.60 H469.30" stroke="#fff" stroke-width="1.26"/><path d="M459.95 418.60 H463.25" stroke="#fff" stroke-width="1.38"/><path d="M458.41 423.28 L468.15 431.60 M464.79 423.28 L455.05 431.60" stroke="#fff" stroke-width="1.09" fill="none"/><path d="M458.41 423.28 H464.79" stroke="#fff" stroke-width="0.92"/><path d="M461.6 416.6 V419" stroke="#fff" stroke-width="1.6"/><path d="M455.4 447 H463 L467 451 V462.4 H455.4 Z" fill="#fff"/><path d="M463 447 V451 H467" fill="none" stroke="#474a54" stroke-width="0.6"/><path d="M458 454.4 H464 M462.6 453 L464.2 454.4 L462.6 455.8 M464.4 458.4 H458.4 M459.8 457 L458.2 458.4 L459.8 459.8" stroke="#474a54" stroke-width="0.8" fill="none"/><path d="M453.2 486 C457 478.2 466.4 478.2 470.2 486 C466.4 493.8 457 493.8 453.2 486 Z" fill="#fff"/><circle cx="461.7" cy="485.6" r="4.0" fill="#474a54"/><circle cx="461.7" cy="485.6" r="2.2" fill="#fff"/><circle cx="493.60" cy="370.56" r="0.56" fill="#c6c4c4"/><rect x="493.31" y="370.85" width="0.58" height="4.95" fill="#c6c4c4"/><path d="M493.07 371.55 H494.13 L495.83 375.41 H491.37 Z" fill="#c6c4c4"/><rect x="492.75" y="373.19" width="0.56" height="0.36" fill="#cce6fe"/><rect x="493.89" y="373.19" width="0.56" height="0.36" fill="#cce6fe"/><rect x="492.44" y="374.01" width="0.87" height="0.39" fill="#cce6fe"/><rect x="493.89" y="374.01" width="0.87" height="0.39" fill="#cce6fe"/><circle cx="496.40" cy="371.38" r="0.78" fill="#fff"/><rect x="496.00" y="371.78" width="0.81" height="6.92" fill="#fff"/><path d="M495.66 372.76 H497.14 L499.52 378.16 H493.28 Z" fill="#fff"/><rect x="495.22" y="375.06" width="0.78" height="0.51" fill="#cce6fe"/><rect x="496.80" y="375.06" width="0.78" height="0.51" fill="#cce6fe"/><rect x="494.78" y="376.20" width="1.21" height="0.54" fill="#cce6fe"/><rect x="496.80" y="376.20" width="1.21" height="0.54" fill="#cce6fe"/><circle cx="507.90" cy="371.40" r="0.80" fill="#fff"/><rect x="507.48" y="371.81" width="0.83" height="7.09" fill="#fff"/><path d="M507.14 372.81 H508.66 L511.10 378.35 H504.70 Z" fill="#fff"/><rect x="506.69" y="375.17" width="0.80" height="0.52" fill="#474a54"/><rect x="508.31" y="375.17" width="0.80" height="0.52" fill="#474a54"/><rect x="506.24" y="376.34" width="1.25" height="0.55" fill="#474a54"/><rect x="508.31" y="376.34" width="1.25" height="0.55" fill="#474a54"/><rect x="516.7" y="370.4" width="8.7" height="8.7" rx="1" fill="none" stroke="#fff" stroke-width="0.6"/><circle cx="521.00" cy="371.57" r="0.77" fill="#fff"/><rect x="520.60" y="371.97" width="0.80" height="6.83" fill="#fff"/><path d="M520.27 372.93 H521.73 L524.08 378.27 H517.92 Z" fill="#fff"/><rect x="519.83" y="375.20" width="0.77" height="0.50" fill="#474a54"/><rect x="521.40" y="375.20" width="0.77" height="0.50" fill="#474a54"/><rect x="519.40" y="376.33" width="1.20" height="0.53" fill="#474a54"/><rect x="521.40" y="376.33" width="1.20" height="0.53" fill="#474a54"/><path d="M531.3 372 H538.1 L535.6 375 V377.5 H533.9 V375 Z" fill="#fff"/><rect x="547.50" y="371.90" width="1.4" height="5.8" fill="#fff" transform="rotate(0 548.2 374.8)"/><rect x="547.50" y="371.90" width="1.4" height="5.8" fill="#fff" transform="rotate(45 548.2 374.8)"/><rect x="547.50" y="371.90" width="1.4" height="5.8" fill="#fff" transform="rotate(90 548.2 374.8)"/><rect x="547.50" y="371.90" width="1.4" height="5.8" fill="#fff" transform="rotate(135 548.2 374.8)"/><circle cx="548.2" cy="374.8" r="2.0" fill="#fff"/><circle cx="548.2" cy="374.8" r="0.8" fill="#474a54"/><path d="M557.4 373.6 H561.4 L559.4 376 Z M561.6 376.2 L563.6 373.6 L565.6 376.2 Z" fill="#fff"/><path d="M561.4 371.8 C559.8 371.6 559.3 372.4 559.4 373.8 M561.4 378.2 C563 378.4 563.7 377.4 563.6 376" stroke="#fff" stroke-width="0.6" fill="none"/><path d="M488.6 388.3 L493 392.5 L488.6 396.7" fill="none" stroke="#8a4a10" stroke-width="2.5"/><path d="M488.6 388.3 L493 392.5 L488.6 396.7" fill="none" stroke="#f58220" stroke-width="1.9"/><path d="M486.6 390.5 L488.6 392.5 L486.6 394.5 L484.6 392.5 Z" fill="#f58220" stroke="#8a4a10" stroke-width="0.3"/><path d="M488.16 399.32 L490.54 401.60 L488.16 403.88" fill="none" stroke="#555" stroke-width="0.8"/><circle cx="499.20" cy="398.30" r="0.80" fill="#2c6cf0"/><rect x="498.78" y="398.71" width="0.83" height="7.09" fill="#2c6cf0"/><path d="M498.44 399.71 H499.96 L502.50 405.25 H495.90 Z" fill="#2c6cf0"/><rect x="497.99" y="402.06" width="0.80" height="0.52" fill="#1d4fc4"/><rect x="499.62" y="402.06" width="0.80" height="0.52" fill="#1d4fc4"/><rect x="497.54" y="403.24" width="1.25" height="0.55" fill="#1d4fc4"/><rect x="499.62" y="403.24" width="1.25" height="0.55" fill="#1d4fc4"/><circle cx="499.2" cy="398.40" r="0.95" fill="#f7c600"/><path d="M488.16 408.39 L490.54 410.67 L488.16 412.95" fill="none" stroke="#555" stroke-width="0.8"/><circle cx="499.20" cy="407.37" r="0.80" fill="#2c6cf0"/><rect x="498.78" y="407.78" width="0.83" height="7.09" fill="#2c6cf0"/><path d="M498.44 408.78 H499.96 L502.50 414.32 H495.90 Z" fill="#2c6cf0"/><rect x="497.99" y="411.13" width="0.80" height="0.52" fill="#1d4fc4"/><rect x="499.62" y="411.13" width="0.80" height="0.52" fill="#1d4fc4"/><rect x="497.54" y="412.31" width="1.25" height="0.55" fill="#1d4fc4"/><rect x="499.62" y="412.31" width="1.25" height="0.55" fill="#1d4fc4"/><circle cx="499.2" cy="407.47" r="0.95" fill="#f7c600"/><path d="M488.16 417.46 L490.54 419.74 L488.16 422.02" fill="none" stroke="#555" stroke-width="0.8"/><circle cx="499.20" cy="416.44" r="0.80" fill="#2c6cf0"/><rect x="498.78" y="416.85" width="0.83" height="7.09" fill="#2c6cf0"/><path d="M498.44 417.85 H499.96 L502.50 423.39 H495.90 Z" fill="#2c6cf0"/><rect x="497.99" y="420.20" width="0.80" height="0.52" fill="#1d4fc4"/><rect x="499.62" y="420.20" width="0.80" height="0.52" fill="#1d4fc4"/><rect x="497.54" y="421.38" width="1.25" height="0.55" fill="#1d4fc4"/><rect x="499.62" y="421.38" width="1.25" height="0.55" fill="#1d4fc4"/><circle cx="499.2" cy="416.54" r="0.95" fill="#f7c600"/><path d="M488.16 426.53 L490.54 428.81 L488.16 431.09" fill="none" stroke="#555" stroke-width="0.8"/><circle cx="499.20" cy="425.51" r="0.80" fill="#2c6cf0"/><rect x="498.78" y="425.92" width="0.83" height="7.09" fill="#2c6cf0"/><path d="M498.44 426.92 H499.96 L502.50 432.46 H495.90 Z" fill="#2c6cf0"/><rect x="497.99" y="429.27" width="0.80" height="0.52" fill="#1d4fc4"/><rect x="499.62" y="429.27" width="0.80" height="0.52" fill="#1d4fc4"/><rect x="497.54" y="430.45" width="1.25" height="0.55" fill="#1d4fc4"/><rect x="499.62" y="430.45" width="1.25" height="0.55" fill="#1d4fc4"/><circle cx="499.2" cy="425.61" r="0.95" fill="#f7c600"/><path d="M488.16 435.60 L490.54 437.88 L488.16 440.16" fill="none" stroke="#555" stroke-width="0.8"/><circle cx="499.20" cy="434.58" r="0.80" fill="#2c6cf0"/><rect x="498.78" y="434.99" width="0.83" height="7.09" fill="#2c6cf0"/><path d="M498.44 435.99 H499.96 L502.50 441.53 H495.90 Z" fill="#2c6cf0"/><rect x="497.99" y="438.34" width="0.80" height="0.52" fill="#1d4fc4"/><rect x="499.62" y="438.34" width="0.80" height="0.52" fill="#1d4fc4"/><rect x="497.54" y="439.52" width="1.25" height="0.55" fill="#1d4fc4"/><rect x="499.62" y="439.52" width="1.25" height="0.55" fill="#1d4fc4"/><circle cx="499.2" cy="434.68" r="0.95" fill="#f7c600"/><path d="M488.16 444.67 L490.54 446.95 L488.16 449.23" fill="none" stroke="#555" stroke-width="0.8"/><circle cx="499.20" cy="443.65" r="0.80" fill="#2c6cf0"/><rect x="498.78" y="444.06" width="0.83" height="7.09" fill="#2c6cf0"/><path d="M498.44 445.06 H499.96 L502.50 450.60 H495.90 Z" fill="#2c6cf0"/><rect x="497.99" y="447.42" width="0.80" height="0.52" fill="#1d4fc4"/><rect x="499.62" y="447.42" width="0.80" height="0.52" fill="#1d4fc4"/><rect x="497.54" y="448.59" width="1.25" height="0.55" fill="#1d4fc4"/><rect x="499.62" y="448.59" width="1.25" height="0.55" fill="#1d4fc4"/><circle cx="499.2" cy="443.75" r="0.95" fill="#f7c600"/><path d="M488.16 453.74 L490.54 456.02 L488.16 458.30" fill="none" stroke="#555" stroke-width="0.8"/><circle cx="499.20" cy="452.72" r="0.80" fill="#2c6cf0"/><rect x="498.78" y="453.13" width="0.83" height="7.09" fill="#2c6cf0"/><path d="M498.44 454.13 H499.96 L502.50 459.67 H495.90 Z" fill="#2c6cf0"/><rect x="497.99" y="456.49" width="0.80" height="0.52" fill="#1d4fc4"/><rect x="499.62" y="456.49" width="0.80" height="0.52" fill="#1d4fc4"/><rect x="497.54" y="457.66" width="1.25" height="0.55" fill="#1d4fc4"/><rect x="499.62" y="457.66" width="1.25" height="0.55" fill="#1d4fc4"/><circle cx="499.2" cy="452.82" r="0.95" fill="#f7c600"/><path d="M488.16 462.81 L490.54 465.09 L488.16 467.37" fill="none" stroke="#555" stroke-width="0.8"/><circle cx="499.20" cy="461.79" r="0.80" fill="#2c6cf0"/><rect x="498.78" y="462.20" width="0.83" height="7.09" fill="#2c6cf0"/><path d="M498.44 463.20 H499.96 L502.50 468.74 H495.90 Z" fill="#2c6cf0"/><rect x="497.99" y="465.56" width="0.80" height="0.52" fill="#1d4fc4"/><rect x="499.62" y="465.56" width="0.80" height="0.52" fill="#1d4fc4"/><rect x="497.54" y="466.73" width="1.25" height="0.55" fill="#1d4fc4"/><rect x="499.62" y="466.73" width="1.25" height="0.55" fill="#1d4fc4"/><circle cx="499.2" cy="461.89" r="0.95" fill="#f7c600"/><path d="M488.16 471.88 L490.54 474.16 L488.16 476.44" fill="none" stroke="#555" stroke-width="0.8"/><circle cx="499.20" cy="470.86" r="0.80" fill="#2c6cf0"/><rect x="498.78" y="471.27" width="0.83" height="7.09" fill="#2c6cf0"/><path d="M498.44 472.27 H499.96 L502.50 477.81 H495.90 Z" fill="#2c6cf0"/><rect x="497.99" y="474.62" width="0.80" height="0.52" fill="#1d4fc4"/><rect x="499.62" y="474.62" width="0.80" height="0.52" fill="#1d4fc4"/><rect x="497.54" y="475.80" width="1.25" height="0.55" fill="#1d4fc4"/><rect x="499.62" y="475.80" width="1.25" height="0.55" fill="#1d4fc4"/><circle cx="499.2" cy="470.96" r="0.95" fill="#f7c600"/><path d="M488.16 480.95 L490.54 483.23 L488.16 485.51" fill="none" stroke="#555" stroke-width="0.8"/><circle cx="499.20" cy="479.93" r="0.80" fill="#2c6cf0"/><rect x="498.78" y="480.34" width="0.83" height="7.09" fill="#2c6cf0"/><path d="M498.44 481.34 H499.96 L502.50 486.88 H495.90 Z" fill="#2c6cf0"/><rect x="497.99" y="483.69" width="0.80" height="0.52" fill="#1d4fc4"/><rect x="499.62" y="483.69" width="0.80" height="0.52" fill="#1d4fc4"/><rect x="497.54" y="484.87" width="1.25" height="0.55" fill="#1d4fc4"/><rect x="499.62" y="484.87" width="1.25" height="0.55" fill="#1d4fc4"/><circle cx="499.2" cy="480.03" r="0.95" fill="#f7c600"/></svg>
<div class="t b" style="left:466px;top:334px;transform:translate(0.60px,0.30px) scaleX(1) rotate(.03deg);font-size:25.4px;color:#f1f1f3;line-height:26px;height:26px;margin-top:-8px;-webkit-text-stroke:0;letter-spacing:0.4px">IP</div>
<svg style="left:0;top:0" width="998" height="489" viewBox="0 0 998 489"><rect x="44.50" y="345.20" width="98.50" height="12.30" fill="none" stroke="#ee1c25" stroke-width="1.4"/><rect x="61.80" y="359.10" width="129.00" height="85.90" fill="none" stroke="#1648e2" stroke-width="1.5"/><rect x="479.50" y="363.50" width="98.80" height="26.20" fill="none" stroke="#ee1c25" stroke-width="1.4"/><rect x="487.40" y="366.90" width="82.90" height="16.90" fill="none" stroke="#1648e2" stroke-width="1.6"/><rect x="671.70" y="232.30" width="251.10" height="67.10" fill="none" stroke="#ee1c25" stroke-width="1.6"/><rect x="681.60" y="244.80" width="229.60" height="40.50" fill="none" stroke="#1648e2" stroke-width="1.6"/><path d="M147.50 356.40 L467.31 373.88" stroke="#1fdd1f" stroke-width="1.7" fill="none"/><path d="M476.80 374.40 L466.59 378.05 L467.04 369.66 Z" fill="#1fdd1f"/><path d="M191.30 408.60 L500.64 380.32" stroke="#1648e2" stroke-width="2.0" fill="none"/><path d="M509.60 379.50 L500.48 384.10 L499.80 376.63 Z" fill="#1648e2"/><path d="M589.70 364.70 L688.48 308.55" stroke="#1fdd1f" stroke-width="1.9" fill="none"/><path d="M696.30 304.10 L690.02 312.27 L686.06 305.32 Z" fill="#1fdd1f"/><path d="M555.80 374.70 L822.03 278.75" stroke="#1648e2" stroke-width="1.9" fill="none"/><path d="M830.50 275.70 L822.92 282.68 L820.21 275.16 Z" fill="#1648e2"/></svg>
</body></html>
